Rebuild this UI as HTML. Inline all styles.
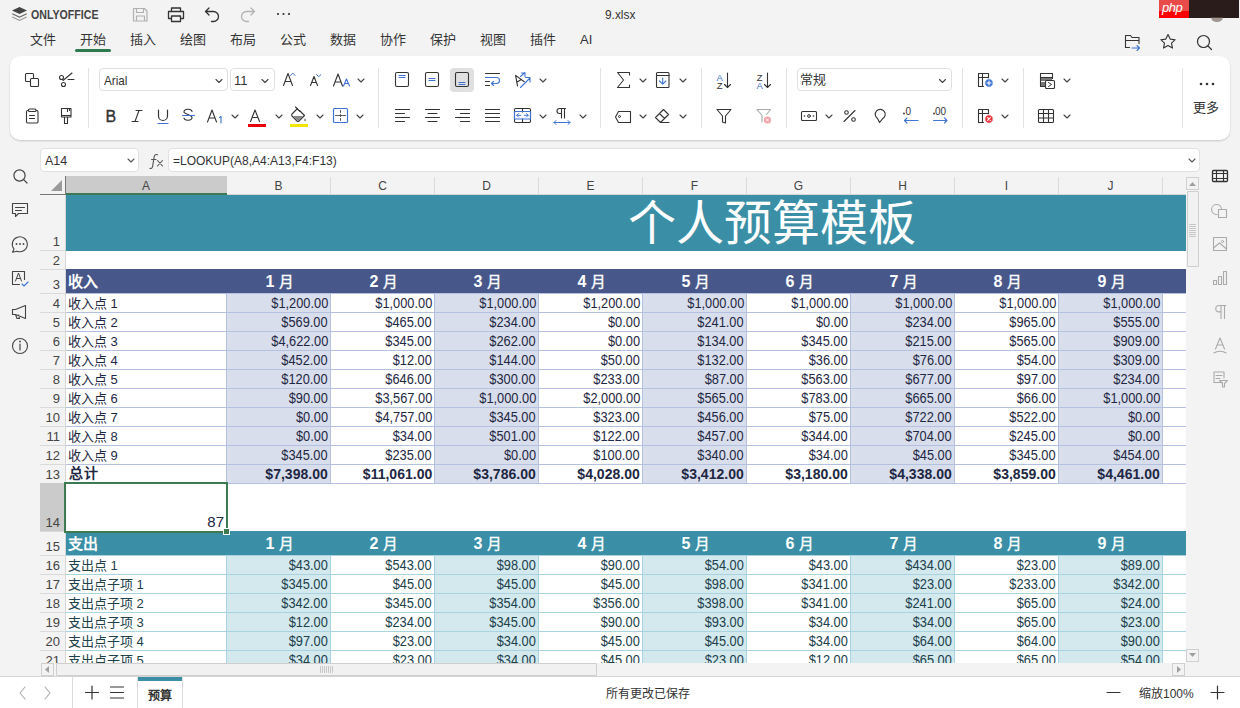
<!DOCTYPE html><html lang="zh-CN"><head><meta charset="utf-8"><style>

html,body{margin:0;padding:0;}
body{width:1240px;height:708px;overflow:hidden;position:relative;background:#f3f3f3;font-family:"Liberation Sans",sans-serif;}
.t{position:absolute;display:flex;align-items:flex-end;white-space:nowrap;font-size:13px;line-height:16px;padding-bottom:0px;box-sizing:border-box;}
.title{font-size:48px;line-height:1;color:#fff;justify-content:center;align-items:center;padding:0;font-family:"Liberation Serif",serif;}
.ab{position:absolute;}
.hd{font-size:12px;color:#444;line-height:15px;}
.rh{font-size:13px;color:#444;line-height:15px;}

</style></head><body>
<div class="ab" style="left:31px;top:8px;white-space:nowrap;font-size:12px;font-weight:bold;color:#444;line-height:15px;transform:scaleX(0.885);transform-origin:0 0">ONLYOFFICE</div>
<div class="ab" style="left:605px;top:7px;white-space:nowrap;font-size:13.5px;color:#333;line-height:16px;transform:scaleX(0.88);transform-origin:0 0">9.xlsx</div>
<div class="ab" style="left:1159px;top:0;width:30px;height:18px;background:#f00"></div>
<div class="ab" style="left:1159px;top:0;width:30px;height:11px;background:#e94b4b"></div>
<div class="ab" style="left:1189px;top:0;width:50px;height:18px;background:#2a1c1a"></div>
<div class="ab" style="left:1211px;top:17px;width:12px;height:5px;border-radius:0 0 6px 6px;background:#6b5a52;opacity:.6"></div>
<div class="ab" style="left:1162px;top:1px;white-space:nowrap;font-size:13px;font-style:italic;color:#fff;line-height:14px;letter-spacing:-0.5px">php</div>
<div class="ab" style="left:30px;top:32px;white-space:nowrap;font-size:13px;color:#333;line-height:16px">文件</div>
<div class="ab" style="left:80px;top:32px;white-space:nowrap;font-size:13px;color:#333;line-height:16px">开始</div>
<div class="ab" style="left:130px;top:32px;white-space:nowrap;font-size:13px;color:#333;line-height:16px">插入</div>
<div class="ab" style="left:180px;top:32px;white-space:nowrap;font-size:13px;color:#333;line-height:16px">绘图</div>
<div class="ab" style="left:230px;top:32px;white-space:nowrap;font-size:13px;color:#333;line-height:16px">布局</div>
<div class="ab" style="left:280px;top:32px;white-space:nowrap;font-size:13px;color:#333;line-height:16px">公式</div>
<div class="ab" style="left:330px;top:32px;white-space:nowrap;font-size:13px;color:#333;line-height:16px">数据</div>
<div class="ab" style="left:380px;top:32px;white-space:nowrap;font-size:13px;color:#333;line-height:16px">协作</div>
<div class="ab" style="left:430px;top:32px;white-space:nowrap;font-size:13px;color:#333;line-height:16px">保护</div>
<div class="ab" style="left:480px;top:32px;white-space:nowrap;font-size:13px;color:#333;line-height:16px">视图</div>
<div class="ab" style="left:530px;top:32px;white-space:nowrap;font-size:13px;color:#333;line-height:16px">插件</div>
<div class="ab" style="left:580px;top:32px;white-space:nowrap;font-size:13px;color:#333;line-height:16px">AI</div>
<div class="ab" style="left:75px;top:49px;width:36px;height:3px;border-radius:2px;background:#2e7a4e"></div>
<div class="ab" style="left:10px;top:56px;width:1220px;height:84px;background:#fff;border-radius:10px;box-shadow:0 1px 2px rgba(0,0,0,0.18)"></div>
<div class="ab" style="left:88px;top:68px;width:1px;height:60px;background:#e3e3e3"></div>
<div class="ab" style="left:378px;top:68px;width:1px;height:60px;background:#e3e3e3"></div>
<div class="ab" style="left:600px;top:68px;width:1px;height:60px;background:#e3e3e3"></div>
<div class="ab" style="left:701px;top:68px;width:1px;height:60px;background:#e3e3e3"></div>
<div class="ab" style="left:786px;top:68px;width:1px;height:60px;background:#e3e3e3"></div>
<div class="ab" style="left:962px;top:68px;width:1px;height:60px;background:#e3e3e3"></div>
<div class="ab" style="left:1023px;top:68px;width:1px;height:60px;background:#e3e3e3"></div>
<div class="ab" style="left:1182px;top:68px;width:1px;height:60px;background:#e3e3e3"></div>
<div class="ab" style="left:99px;top:68px;width:129px;height:23px;border:1px solid #e0e0e0;border-radius:4px;box-sizing:border-box;background:#fff"></div>
<div class="ab" style="left:104px;top:73px;white-space:nowrap;font-size:13px;color:#333;line-height:16px;transform:scaleX(0.9);transform-origin:0 0">Arial</div>
<div class="ab" style="left:230px;top:68px;width:45px;height:23px;border:1px solid #e0e0e0;border-radius:4px;box-sizing:border-box;background:#fff"></div>
<div class="ab" style="left:234px;top:73px;white-space:nowrap;font-size:13px;color:#333;line-height:16px">11</div>
<div class="ab" style="left:797px;top:68px;width:155px;height:23px;border:1px solid #e0e0e0;border-radius:4px;box-sizing:border-box;background:#fff"></div>
<div class="ab" style="left:800px;top:72px;white-space:nowrap;font-size:13px;color:#333;line-height:16px">常规</div>
<div class="ab" style="left:450px;top:68px;width:24px;height:24px;border-radius:4px;background:#e0e0e0"></div>
<div class="ab" style="left:1193px;top:100px;white-space:nowrap;font-size:13px;color:#333;line-height:16px">更多</div>
<div class="ab" style="left:40px;top:148px;width:99px;height:24px;border:1px solid #e2e2e2;border-radius:4px;box-sizing:border-box;background:#fff"></div>
<div class="ab" style="left:45px;top:154px;white-space:nowrap;font-size:12.5px;color:#333;line-height:14px">A14</div>
<div class="ab" style="left:168px;top:148px;width:1032px;height:24px;border:1px solid #e2e2e2;border-radius:4px;box-sizing:border-box;background:#fff"></div>
<div class="ab" style="left:173px;top:154px;white-space:nowrap;font-size:12.5px;color:#333;line-height:14px;transform:scaleX(0.96);transform-origin:0 0">=LOOKUP(A8,A4:A13,F4:F13)</div>
<div class="ab" style="left:40px;top:176px;width:1146px;height:18px;background:#f3f3f3"></div>
<div class="ab" style="left:66px;top:176px;width:161px;height:17px;background:#cbcbcb"></div>
<div class="ab" style="left:40px;top:194px;width:1146px;height:1px;background:#d6d6d6"></div>
<div class="ab" style="left:40px;top:194px;width:26px;height:1px;background:#777"></div>
<div class="ab" style="left:65px;top:176px;width:1px;height:19px;background:#777"></div>
<div class="ab" style="left:66px;top:193px;width:161px;height:2px;background:#3b7a52"></div>
<div class="ab hd" style="left:66px;top:179px;width:160px;text-align:center">A</div>
<div class="ab" style="left:330px;top:177px;width:1px;height:17px;background:#dadada"></div>
<div class="ab hd" style="left:227px;top:179px;width:103px;text-align:center">B</div>
<div class="ab" style="left:434px;top:177px;width:1px;height:17px;background:#dadada"></div>
<div class="ab hd" style="left:331px;top:179px;width:103px;text-align:center">C</div>
<div class="ab" style="left:538px;top:177px;width:1px;height:17px;background:#dadada"></div>
<div class="ab hd" style="left:435px;top:179px;width:103px;text-align:center">D</div>
<div class="ab" style="left:642px;top:177px;width:1px;height:17px;background:#dadada"></div>
<div class="ab hd" style="left:539px;top:179px;width:103px;text-align:center">E</div>
<div class="ab" style="left:746px;top:177px;width:1px;height:17px;background:#dadada"></div>
<div class="ab hd" style="left:643px;top:179px;width:103px;text-align:center">F</div>
<div class="ab" style="left:850px;top:177px;width:1px;height:17px;background:#dadada"></div>
<div class="ab hd" style="left:747px;top:179px;width:103px;text-align:center">G</div>
<div class="ab" style="left:954px;top:177px;width:1px;height:17px;background:#dadada"></div>
<div class="ab hd" style="left:851px;top:179px;width:103px;text-align:center">H</div>
<div class="ab" style="left:1058px;top:177px;width:1px;height:17px;background:#dadada"></div>
<div class="ab hd" style="left:955px;top:179px;width:103px;text-align:center">I</div>
<div class="ab" style="left:1162px;top:177px;width:1px;height:17px;background:#dadada"></div>
<div class="ab hd" style="left:1059px;top:179px;width:103px;text-align:center">J</div>
<div class="ab" style="left:40px;top:195px;width:25px;height:468px;background:#f3f3f3"></div>
<div class="ab" style="left:65px;top:195px;width:1px;height:468px;background:#d6d6d6"></div>
<div class="ab" style="left:40px;top:250px;width:25px;height:1px;background:#dadada"></div>
<div class="ab rh" style="left:40px;top:234px;width:20px;text-align:right">1</div>
<div class="ab" style="left:40px;top:269px;width:25px;height:1px;background:#dadada"></div>
<div class="ab rh" style="left:40px;top:253px;width:20px;text-align:right">2</div>
<div class="ab" style="left:40px;top:293px;width:25px;height:1px;background:#dadada"></div>
<div class="ab rh" style="left:40px;top:277px;width:20px;text-align:right">3</div>
<div class="ab" style="left:40px;top:312px;width:25px;height:1px;background:#dadada"></div>
<div class="ab rh" style="left:40px;top:296px;width:20px;text-align:right">4</div>
<div class="ab" style="left:40px;top:331px;width:25px;height:1px;background:#dadada"></div>
<div class="ab rh" style="left:40px;top:315px;width:20px;text-align:right">5</div>
<div class="ab" style="left:40px;top:350px;width:25px;height:1px;background:#dadada"></div>
<div class="ab rh" style="left:40px;top:334px;width:20px;text-align:right">6</div>
<div class="ab" style="left:40px;top:369px;width:25px;height:1px;background:#dadada"></div>
<div class="ab rh" style="left:40px;top:353px;width:20px;text-align:right">7</div>
<div class="ab" style="left:40px;top:388px;width:25px;height:1px;background:#dadada"></div>
<div class="ab rh" style="left:40px;top:372px;width:20px;text-align:right">8</div>
<div class="ab" style="left:40px;top:407px;width:25px;height:1px;background:#dadada"></div>
<div class="ab rh" style="left:40px;top:391px;width:20px;text-align:right">9</div>
<div class="ab" style="left:40px;top:426px;width:25px;height:1px;background:#dadada"></div>
<div class="ab rh" style="left:40px;top:410px;width:20px;text-align:right">10</div>
<div class="ab" style="left:40px;top:445px;width:25px;height:1px;background:#dadada"></div>
<div class="ab rh" style="left:40px;top:429px;width:20px;text-align:right">11</div>
<div class="ab" style="left:40px;top:464px;width:25px;height:1px;background:#dadada"></div>
<div class="ab rh" style="left:40px;top:448px;width:20px;text-align:right">12</div>
<div class="ab" style="left:40px;top:483px;width:25px;height:1px;background:#dadada"></div>
<div class="ab rh" style="left:40px;top:467px;width:20px;text-align:right">13</div>
<div class="ab" style="left:40px;top:483px;width:25px;height:48px;background:#cbcbcb"></div>
<div class="ab" style="left:40px;top:531px;width:25px;height:1px;background:#dadada"></div>
<div class="ab rh" style="left:40px;top:515px;width:20px;text-align:right">14</div>
<div class="ab" style="left:40px;top:555px;width:25px;height:1px;background:#dadada"></div>
<div class="ab rh" style="left:40px;top:539px;width:20px;text-align:right">15</div>
<div class="ab" style="left:40px;top:574px;width:25px;height:1px;background:#dadada"></div>
<div class="ab rh" style="left:40px;top:558px;width:20px;text-align:right">16</div>
<div class="ab" style="left:40px;top:593px;width:25px;height:1px;background:#dadada"></div>
<div class="ab rh" style="left:40px;top:577px;width:20px;text-align:right">17</div>
<div class="ab" style="left:40px;top:612px;width:25px;height:1px;background:#dadada"></div>
<div class="ab rh" style="left:40px;top:596px;width:20px;text-align:right">18</div>
<div class="ab" style="left:40px;top:631px;width:25px;height:1px;background:#dadada"></div>
<div class="ab rh" style="left:40px;top:615px;width:20px;text-align:right">19</div>
<div class="ab" style="left:40px;top:650px;width:25px;height:1px;background:#dadada"></div>
<div class="ab rh" style="left:40px;top:634px;width:20px;text-align:right">20</div>
<div class="ab" style="left:40px;top:669px;width:25px;height:1px;background:#dadada"></div>
<div class="ab rh" style="left:40px;top:653px;width:20px;text-align:right">21</div>
<div class="ab" style="left:1186px;top:176px;width:13px;height:487px;background:#f3f3f3"></div>
<div class="ab" style="left:1186px;top:177px;width:13px;height:13px;border:1px solid #d0d0d0;box-sizing:border-box;background:#f3f3f3"></div>
<div class="ab" style="left:1187px;top:191px;width:12px;height:76px;border:1px solid #cfcfcf;box-sizing:border-box;background:#f1f1f1;border-radius:1px"></div>
<div class="ab" style="left:1186px;top:649px;width:13px;height:13px;border:1px solid #d0d0d0;box-sizing:border-box;background:#f3f3f3"></div>
<div class="ab" style="left:40px;top:663px;width:1146px;height:14px;background:#f3f3f3"></div>
<div class="ab" style="left:41px;top:663px;width:13px;height:13px;border:1px solid #d0d0d0;box-sizing:border-box;background:#f3f3f3"></div>
<div class="ab" style="left:56px;top:663px;width:541px;height:13px;border:1px solid #cfcfcf;box-sizing:border-box;background:#f1f1f1;border-radius:1px"></div>
<div class="ab" style="left:1172px;top:663px;width:13px;height:13px;border:1px solid #d0d0d0;box-sizing:border-box;background:#f3f3f3"></div>
<div class="ab" style="left:0;top:676px;width:1240px;height:1px;background:#d4d4d4"></div>
<div class="ab" style="left:0;top:677px;width:1240px;height:31px;background:#fff"></div>
<div class="ab" style="left:72px;top:677px;width:1px;height:31px;background:#dcdcdc"></div>
<div class="ab" style="left:137px;top:677px;width:1px;height:31px;background:#dcdcdc"></div>
<div class="ab" style="left:182px;top:677px;width:1px;height:31px;background:#dcdcdc"></div>
<div class="ab" style="left:138px;top:677px;width:44px;height:4px;background:#3a8fa6"></div>
<div class="ab" style="left:148px;top:689px;white-space:nowrap;font-size:12px;color:#333;font-weight:bold;line-height:15px">预算</div>
<div class="ab" style="left:606px;top:687px;white-space:nowrap;font-size:12px;color:#333;line-height:15px">所有更改已保存</div>
<div class="ab" style="left:1139px;top:687px;white-space:nowrap;font-size:12px;color:#333;line-height:15px">缩放100%</div>
<div id="grid" style="position:absolute;left:0;top:0;width:1240px;height:708px;overflow:hidden;clip-path:inset(195px 54px 45px 66px)">
<div style="position:absolute;left:66px;top:195px;width:1120px;height:468px;background:#fff;"></div>
<div style="position:absolute;left:66px;top:195px;width:1120px;height:56px;background:#3a8fa6;"></div>
<div class="t title" style="left:622px;top:196px;width:300px;height:56px;">个人预算模板</div>
<div style="position:absolute;left:66px;top:269px;width:1120px;height:24px;background:#48578a;"></div>
<div style="position:absolute;left:66px;top:294px;width:160px;height:18px;background:#fff;"></div>
<div style="position:absolute;left:227px;top:294px;width:103px;height:18px;background:#d9deec;"></div>
<div style="position:absolute;left:331px;top:294px;width:103px;height:18px;background:#fff;"></div>
<div style="position:absolute;left:435px;top:294px;width:103px;height:18px;background:#d9deec;"></div>
<div style="position:absolute;left:539px;top:294px;width:103px;height:18px;background:#fff;"></div>
<div style="position:absolute;left:643px;top:294px;width:103px;height:18px;background:#d9deec;"></div>
<div style="position:absolute;left:747px;top:294px;width:103px;height:18px;background:#fff;"></div>
<div style="position:absolute;left:851px;top:294px;width:103px;height:18px;background:#d9deec;"></div>
<div style="position:absolute;left:955px;top:294px;width:103px;height:18px;background:#fff;"></div>
<div style="position:absolute;left:1059px;top:294px;width:103px;height:18px;background:#d9deec;"></div>
<div style="position:absolute;left:66px;top:313px;width:160px;height:18px;background:#fff;"></div>
<div style="position:absolute;left:227px;top:313px;width:103px;height:18px;background:#d9deec;"></div>
<div style="position:absolute;left:331px;top:313px;width:103px;height:18px;background:#fff;"></div>
<div style="position:absolute;left:435px;top:313px;width:103px;height:18px;background:#d9deec;"></div>
<div style="position:absolute;left:539px;top:313px;width:103px;height:18px;background:#fff;"></div>
<div style="position:absolute;left:643px;top:313px;width:103px;height:18px;background:#d9deec;"></div>
<div style="position:absolute;left:747px;top:313px;width:103px;height:18px;background:#fff;"></div>
<div style="position:absolute;left:851px;top:313px;width:103px;height:18px;background:#d9deec;"></div>
<div style="position:absolute;left:955px;top:313px;width:103px;height:18px;background:#fff;"></div>
<div style="position:absolute;left:1059px;top:313px;width:103px;height:18px;background:#d9deec;"></div>
<div style="position:absolute;left:66px;top:332px;width:160px;height:18px;background:#fff;"></div>
<div style="position:absolute;left:227px;top:332px;width:103px;height:18px;background:#d9deec;"></div>
<div style="position:absolute;left:331px;top:332px;width:103px;height:18px;background:#fff;"></div>
<div style="position:absolute;left:435px;top:332px;width:103px;height:18px;background:#d9deec;"></div>
<div style="position:absolute;left:539px;top:332px;width:103px;height:18px;background:#fff;"></div>
<div style="position:absolute;left:643px;top:332px;width:103px;height:18px;background:#d9deec;"></div>
<div style="position:absolute;left:747px;top:332px;width:103px;height:18px;background:#fff;"></div>
<div style="position:absolute;left:851px;top:332px;width:103px;height:18px;background:#d9deec;"></div>
<div style="position:absolute;left:955px;top:332px;width:103px;height:18px;background:#fff;"></div>
<div style="position:absolute;left:1059px;top:332px;width:103px;height:18px;background:#d9deec;"></div>
<div style="position:absolute;left:66px;top:351px;width:160px;height:18px;background:#fff;"></div>
<div style="position:absolute;left:227px;top:351px;width:103px;height:18px;background:#d9deec;"></div>
<div style="position:absolute;left:331px;top:351px;width:103px;height:18px;background:#fff;"></div>
<div style="position:absolute;left:435px;top:351px;width:103px;height:18px;background:#d9deec;"></div>
<div style="position:absolute;left:539px;top:351px;width:103px;height:18px;background:#fff;"></div>
<div style="position:absolute;left:643px;top:351px;width:103px;height:18px;background:#d9deec;"></div>
<div style="position:absolute;left:747px;top:351px;width:103px;height:18px;background:#fff;"></div>
<div style="position:absolute;left:851px;top:351px;width:103px;height:18px;background:#d9deec;"></div>
<div style="position:absolute;left:955px;top:351px;width:103px;height:18px;background:#fff;"></div>
<div style="position:absolute;left:1059px;top:351px;width:103px;height:18px;background:#d9deec;"></div>
<div style="position:absolute;left:66px;top:370px;width:160px;height:18px;background:#fff;"></div>
<div style="position:absolute;left:227px;top:370px;width:103px;height:18px;background:#d9deec;"></div>
<div style="position:absolute;left:331px;top:370px;width:103px;height:18px;background:#fff;"></div>
<div style="position:absolute;left:435px;top:370px;width:103px;height:18px;background:#d9deec;"></div>
<div style="position:absolute;left:539px;top:370px;width:103px;height:18px;background:#fff;"></div>
<div style="position:absolute;left:643px;top:370px;width:103px;height:18px;background:#d9deec;"></div>
<div style="position:absolute;left:747px;top:370px;width:103px;height:18px;background:#fff;"></div>
<div style="position:absolute;left:851px;top:370px;width:103px;height:18px;background:#d9deec;"></div>
<div style="position:absolute;left:955px;top:370px;width:103px;height:18px;background:#fff;"></div>
<div style="position:absolute;left:1059px;top:370px;width:103px;height:18px;background:#d9deec;"></div>
<div style="position:absolute;left:66px;top:389px;width:160px;height:18px;background:#fff;"></div>
<div style="position:absolute;left:227px;top:389px;width:103px;height:18px;background:#d9deec;"></div>
<div style="position:absolute;left:331px;top:389px;width:103px;height:18px;background:#fff;"></div>
<div style="position:absolute;left:435px;top:389px;width:103px;height:18px;background:#d9deec;"></div>
<div style="position:absolute;left:539px;top:389px;width:103px;height:18px;background:#fff;"></div>
<div style="position:absolute;left:643px;top:389px;width:103px;height:18px;background:#d9deec;"></div>
<div style="position:absolute;left:747px;top:389px;width:103px;height:18px;background:#fff;"></div>
<div style="position:absolute;left:851px;top:389px;width:103px;height:18px;background:#d9deec;"></div>
<div style="position:absolute;left:955px;top:389px;width:103px;height:18px;background:#fff;"></div>
<div style="position:absolute;left:1059px;top:389px;width:103px;height:18px;background:#d9deec;"></div>
<div style="position:absolute;left:66px;top:408px;width:160px;height:18px;background:#fff;"></div>
<div style="position:absolute;left:227px;top:408px;width:103px;height:18px;background:#d9deec;"></div>
<div style="position:absolute;left:331px;top:408px;width:103px;height:18px;background:#fff;"></div>
<div style="position:absolute;left:435px;top:408px;width:103px;height:18px;background:#d9deec;"></div>
<div style="position:absolute;left:539px;top:408px;width:103px;height:18px;background:#fff;"></div>
<div style="position:absolute;left:643px;top:408px;width:103px;height:18px;background:#d9deec;"></div>
<div style="position:absolute;left:747px;top:408px;width:103px;height:18px;background:#fff;"></div>
<div style="position:absolute;left:851px;top:408px;width:103px;height:18px;background:#d9deec;"></div>
<div style="position:absolute;left:955px;top:408px;width:103px;height:18px;background:#fff;"></div>
<div style="position:absolute;left:1059px;top:408px;width:103px;height:18px;background:#d9deec;"></div>
<div style="position:absolute;left:66px;top:427px;width:160px;height:18px;background:#fff;"></div>
<div style="position:absolute;left:227px;top:427px;width:103px;height:18px;background:#d9deec;"></div>
<div style="position:absolute;left:331px;top:427px;width:103px;height:18px;background:#fff;"></div>
<div style="position:absolute;left:435px;top:427px;width:103px;height:18px;background:#d9deec;"></div>
<div style="position:absolute;left:539px;top:427px;width:103px;height:18px;background:#fff;"></div>
<div style="position:absolute;left:643px;top:427px;width:103px;height:18px;background:#d9deec;"></div>
<div style="position:absolute;left:747px;top:427px;width:103px;height:18px;background:#fff;"></div>
<div style="position:absolute;left:851px;top:427px;width:103px;height:18px;background:#d9deec;"></div>
<div style="position:absolute;left:955px;top:427px;width:103px;height:18px;background:#fff;"></div>
<div style="position:absolute;left:1059px;top:427px;width:103px;height:18px;background:#d9deec;"></div>
<div style="position:absolute;left:66px;top:446px;width:160px;height:18px;background:#fff;"></div>
<div style="position:absolute;left:227px;top:446px;width:103px;height:18px;background:#d9deec;"></div>
<div style="position:absolute;left:331px;top:446px;width:103px;height:18px;background:#fff;"></div>
<div style="position:absolute;left:435px;top:446px;width:103px;height:18px;background:#d9deec;"></div>
<div style="position:absolute;left:539px;top:446px;width:103px;height:18px;background:#fff;"></div>
<div style="position:absolute;left:643px;top:446px;width:103px;height:18px;background:#d9deec;"></div>
<div style="position:absolute;left:747px;top:446px;width:103px;height:18px;background:#fff;"></div>
<div style="position:absolute;left:851px;top:446px;width:103px;height:18px;background:#d9deec;"></div>
<div style="position:absolute;left:955px;top:446px;width:103px;height:18px;background:#fff;"></div>
<div style="position:absolute;left:1059px;top:446px;width:103px;height:18px;background:#d9deec;"></div>
<div style="position:absolute;left:66px;top:465px;width:160px;height:18px;background:#fff;"></div>
<div style="position:absolute;left:227px;top:465px;width:103px;height:18px;background:#d9deec;"></div>
<div style="position:absolute;left:331px;top:465px;width:103px;height:18px;background:#fff;"></div>
<div style="position:absolute;left:435px;top:465px;width:103px;height:18px;background:#d9deec;"></div>
<div style="position:absolute;left:539px;top:465px;width:103px;height:18px;background:#fff;"></div>
<div style="position:absolute;left:643px;top:465px;width:103px;height:18px;background:#d9deec;"></div>
<div style="position:absolute;left:747px;top:465px;width:103px;height:18px;background:#fff;"></div>
<div style="position:absolute;left:851px;top:465px;width:103px;height:18px;background:#d9deec;"></div>
<div style="position:absolute;left:955px;top:465px;width:103px;height:18px;background:#fff;"></div>
<div style="position:absolute;left:1059px;top:465px;width:103px;height:18px;background:#d9deec;"></div>
<div style="position:absolute;left:66px;top:293px;width:1120px;height:1px;background:#b4c1e0;"></div>
<div style="position:absolute;left:66px;top:312px;width:1120px;height:1px;background:#b4c1e0;"></div>
<div style="position:absolute;left:66px;top:331px;width:1120px;height:1px;background:#b4c1e0;"></div>
<div style="position:absolute;left:66px;top:350px;width:1120px;height:1px;background:#b4c1e0;"></div>
<div style="position:absolute;left:66px;top:369px;width:1120px;height:1px;background:#b4c1e0;"></div>
<div style="position:absolute;left:66px;top:388px;width:1120px;height:1px;background:#b4c1e0;"></div>
<div style="position:absolute;left:66px;top:407px;width:1120px;height:1px;background:#b4c1e0;"></div>
<div style="position:absolute;left:66px;top:426px;width:1120px;height:1px;background:#b4c1e0;"></div>
<div style="position:absolute;left:66px;top:445px;width:1120px;height:1px;background:#b4c1e0;"></div>
<div style="position:absolute;left:66px;top:464px;width:1120px;height:1px;background:#b4c1e0;"></div>
<div style="position:absolute;left:66px;top:483px;width:1120px;height:1px;background:#b4c1e0;"></div>
<div style="position:absolute;left:226px;top:293px;width:1px;height:190px;background:#b4c1e0;"></div>
<div style="position:absolute;left:330px;top:293px;width:1px;height:190px;background:#b4c1e0;"></div>
<div style="position:absolute;left:434px;top:293px;width:1px;height:190px;background:#b4c1e0;"></div>
<div style="position:absolute;left:538px;top:293px;width:1px;height:190px;background:#b4c1e0;"></div>
<div style="position:absolute;left:642px;top:293px;width:1px;height:190px;background:#b4c1e0;"></div>
<div style="position:absolute;left:746px;top:293px;width:1px;height:190px;background:#b4c1e0;"></div>
<div style="position:absolute;left:850px;top:293px;width:1px;height:190px;background:#b4c1e0;"></div>
<div style="position:absolute;left:954px;top:293px;width:1px;height:190px;background:#b4c1e0;"></div>
<div style="position:absolute;left:1058px;top:293px;width:1px;height:190px;background:#b4c1e0;"></div>
<div style="position:absolute;left:1162px;top:293px;width:1px;height:190px;background:#b4c1e0;"></div>
<div style="position:absolute;left:66px;top:531px;width:1120px;height:24px;background:#3a8fa6;"></div>
<div style="position:absolute;left:66px;top:556px;width:160px;height:18px;background:#fff;"></div>
<div style="position:absolute;left:227px;top:556px;width:103px;height:18px;background:#d3e9ee;"></div>
<div style="position:absolute;left:331px;top:556px;width:103px;height:18px;background:#fff;"></div>
<div style="position:absolute;left:435px;top:556px;width:103px;height:18px;background:#d3e9ee;"></div>
<div style="position:absolute;left:539px;top:556px;width:103px;height:18px;background:#fff;"></div>
<div style="position:absolute;left:643px;top:556px;width:103px;height:18px;background:#d3e9ee;"></div>
<div style="position:absolute;left:747px;top:556px;width:103px;height:18px;background:#fff;"></div>
<div style="position:absolute;left:851px;top:556px;width:103px;height:18px;background:#d3e9ee;"></div>
<div style="position:absolute;left:955px;top:556px;width:103px;height:18px;background:#fff;"></div>
<div style="position:absolute;left:1059px;top:556px;width:103px;height:18px;background:#d3e9ee;"></div>
<div style="position:absolute;left:66px;top:575px;width:160px;height:18px;background:#fff;"></div>
<div style="position:absolute;left:227px;top:575px;width:103px;height:18px;background:#d3e9ee;"></div>
<div style="position:absolute;left:331px;top:575px;width:103px;height:18px;background:#fff;"></div>
<div style="position:absolute;left:435px;top:575px;width:103px;height:18px;background:#d3e9ee;"></div>
<div style="position:absolute;left:539px;top:575px;width:103px;height:18px;background:#fff;"></div>
<div style="position:absolute;left:643px;top:575px;width:103px;height:18px;background:#d3e9ee;"></div>
<div style="position:absolute;left:747px;top:575px;width:103px;height:18px;background:#fff;"></div>
<div style="position:absolute;left:851px;top:575px;width:103px;height:18px;background:#d3e9ee;"></div>
<div style="position:absolute;left:955px;top:575px;width:103px;height:18px;background:#fff;"></div>
<div style="position:absolute;left:1059px;top:575px;width:103px;height:18px;background:#d3e9ee;"></div>
<div style="position:absolute;left:66px;top:594px;width:160px;height:18px;background:#fff;"></div>
<div style="position:absolute;left:227px;top:594px;width:103px;height:18px;background:#d3e9ee;"></div>
<div style="position:absolute;left:331px;top:594px;width:103px;height:18px;background:#fff;"></div>
<div style="position:absolute;left:435px;top:594px;width:103px;height:18px;background:#d3e9ee;"></div>
<div style="position:absolute;left:539px;top:594px;width:103px;height:18px;background:#fff;"></div>
<div style="position:absolute;left:643px;top:594px;width:103px;height:18px;background:#d3e9ee;"></div>
<div style="position:absolute;left:747px;top:594px;width:103px;height:18px;background:#fff;"></div>
<div style="position:absolute;left:851px;top:594px;width:103px;height:18px;background:#d3e9ee;"></div>
<div style="position:absolute;left:955px;top:594px;width:103px;height:18px;background:#fff;"></div>
<div style="position:absolute;left:1059px;top:594px;width:103px;height:18px;background:#d3e9ee;"></div>
<div style="position:absolute;left:66px;top:613px;width:160px;height:18px;background:#fff;"></div>
<div style="position:absolute;left:227px;top:613px;width:103px;height:18px;background:#d3e9ee;"></div>
<div style="position:absolute;left:331px;top:613px;width:103px;height:18px;background:#fff;"></div>
<div style="position:absolute;left:435px;top:613px;width:103px;height:18px;background:#d3e9ee;"></div>
<div style="position:absolute;left:539px;top:613px;width:103px;height:18px;background:#fff;"></div>
<div style="position:absolute;left:643px;top:613px;width:103px;height:18px;background:#d3e9ee;"></div>
<div style="position:absolute;left:747px;top:613px;width:103px;height:18px;background:#fff;"></div>
<div style="position:absolute;left:851px;top:613px;width:103px;height:18px;background:#d3e9ee;"></div>
<div style="position:absolute;left:955px;top:613px;width:103px;height:18px;background:#fff;"></div>
<div style="position:absolute;left:1059px;top:613px;width:103px;height:18px;background:#d3e9ee;"></div>
<div style="position:absolute;left:66px;top:632px;width:160px;height:18px;background:#fff;"></div>
<div style="position:absolute;left:227px;top:632px;width:103px;height:18px;background:#d3e9ee;"></div>
<div style="position:absolute;left:331px;top:632px;width:103px;height:18px;background:#fff;"></div>
<div style="position:absolute;left:435px;top:632px;width:103px;height:18px;background:#d3e9ee;"></div>
<div style="position:absolute;left:539px;top:632px;width:103px;height:18px;background:#fff;"></div>
<div style="position:absolute;left:643px;top:632px;width:103px;height:18px;background:#d3e9ee;"></div>
<div style="position:absolute;left:747px;top:632px;width:103px;height:18px;background:#fff;"></div>
<div style="position:absolute;left:851px;top:632px;width:103px;height:18px;background:#d3e9ee;"></div>
<div style="position:absolute;left:955px;top:632px;width:103px;height:18px;background:#fff;"></div>
<div style="position:absolute;left:1059px;top:632px;width:103px;height:18px;background:#d3e9ee;"></div>
<div style="position:absolute;left:66px;top:651px;width:160px;height:18px;background:#fff;"></div>
<div style="position:absolute;left:227px;top:651px;width:103px;height:18px;background:#d3e9ee;"></div>
<div style="position:absolute;left:331px;top:651px;width:103px;height:18px;background:#fff;"></div>
<div style="position:absolute;left:435px;top:651px;width:103px;height:18px;background:#d3e9ee;"></div>
<div style="position:absolute;left:539px;top:651px;width:103px;height:18px;background:#fff;"></div>
<div style="position:absolute;left:643px;top:651px;width:103px;height:18px;background:#d3e9ee;"></div>
<div style="position:absolute;left:747px;top:651px;width:103px;height:18px;background:#fff;"></div>
<div style="position:absolute;left:851px;top:651px;width:103px;height:18px;background:#d3e9ee;"></div>
<div style="position:absolute;left:955px;top:651px;width:103px;height:18px;background:#fff;"></div>
<div style="position:absolute;left:1059px;top:651px;width:103px;height:18px;background:#d3e9ee;"></div>
<div style="position:absolute;left:66px;top:555px;width:1120px;height:1px;background:#a8d3e1;"></div>
<div style="position:absolute;left:66px;top:574px;width:1120px;height:1px;background:#a8d3e1;"></div>
<div style="position:absolute;left:66px;top:593px;width:1120px;height:1px;background:#a8d3e1;"></div>
<div style="position:absolute;left:66px;top:612px;width:1120px;height:1px;background:#a8d3e1;"></div>
<div style="position:absolute;left:66px;top:631px;width:1120px;height:1px;background:#a8d3e1;"></div>
<div style="position:absolute;left:66px;top:650px;width:1120px;height:1px;background:#a8d3e1;"></div>
<div style="position:absolute;left:66px;top:669px;width:1120px;height:1px;background:#a8d3e1;"></div>
<div style="position:absolute;left:226px;top:555px;width:1px;height:108px;background:#a8d3e1;"></div>
<div style="position:absolute;left:330px;top:555px;width:1px;height:108px;background:#a8d3e1;"></div>
<div style="position:absolute;left:434px;top:555px;width:1px;height:108px;background:#a8d3e1;"></div>
<div style="position:absolute;left:538px;top:555px;width:1px;height:108px;background:#a8d3e1;"></div>
<div style="position:absolute;left:642px;top:555px;width:1px;height:108px;background:#a8d3e1;"></div>
<div style="position:absolute;left:746px;top:555px;width:1px;height:108px;background:#a8d3e1;"></div>
<div style="position:absolute;left:850px;top:555px;width:1px;height:108px;background:#a8d3e1;"></div>
<div style="position:absolute;left:954px;top:555px;width:1px;height:108px;background:#a8d3e1;"></div>
<div style="position:absolute;left:1058px;top:555px;width:1px;height:108px;background:#a8d3e1;"></div>
<div style="position:absolute;left:1162px;top:555px;width:1px;height:108px;background:#a8d3e1;"></div>
<div class="t" style="left:68px;top:270px;width:150px;height:23px;color:#fff;font-weight:bold;font-size:15px;line-height:1;align-items:flex-end;padding-bottom:4px;box-sizing:border-box">收入</div>
<div class="t" style="left:265.5px;top:270px;width:12px;height:23px;color:#fff;font-weight:bold;font-size:16px;line-height:1;padding-bottom:3px;">1</div>
<div class="t" style="left:279px;top:270px;width:16px;height:23px;color:#fff;font-weight:normal;-webkit-text-stroke:0.4px #fff;font-size:14.5px;line-height:1;padding-bottom:4px;">月</div>
<div class="t" style="left:369.5px;top:270px;width:12px;height:23px;color:#fff;font-weight:bold;font-size:16px;line-height:1;padding-bottom:3px;">2</div>
<div class="t" style="left:383px;top:270px;width:16px;height:23px;color:#fff;font-weight:normal;-webkit-text-stroke:0.4px #fff;font-size:14.5px;line-height:1;padding-bottom:4px;">月</div>
<div class="t" style="left:473.5px;top:270px;width:12px;height:23px;color:#fff;font-weight:bold;font-size:16px;line-height:1;padding-bottom:3px;">3</div>
<div class="t" style="left:487px;top:270px;width:16px;height:23px;color:#fff;font-weight:normal;-webkit-text-stroke:0.4px #fff;font-size:14.5px;line-height:1;padding-bottom:4px;">月</div>
<div class="t" style="left:577.5px;top:270px;width:12px;height:23px;color:#fff;font-weight:bold;font-size:16px;line-height:1;padding-bottom:3px;">4</div>
<div class="t" style="left:591px;top:270px;width:16px;height:23px;color:#fff;font-weight:normal;-webkit-text-stroke:0.4px #fff;font-size:14.5px;line-height:1;padding-bottom:4px;">月</div>
<div class="t" style="left:681.5px;top:270px;width:12px;height:23px;color:#fff;font-weight:bold;font-size:16px;line-height:1;padding-bottom:3px;">5</div>
<div class="t" style="left:695px;top:270px;width:16px;height:23px;color:#fff;font-weight:normal;-webkit-text-stroke:0.4px #fff;font-size:14.5px;line-height:1;padding-bottom:4px;">月</div>
<div class="t" style="left:785.5px;top:270px;width:12px;height:23px;color:#fff;font-weight:bold;font-size:16px;line-height:1;padding-bottom:3px;">6</div>
<div class="t" style="left:799px;top:270px;width:16px;height:23px;color:#fff;font-weight:normal;-webkit-text-stroke:0.4px #fff;font-size:14.5px;line-height:1;padding-bottom:4px;">月</div>
<div class="t" style="left:889.5px;top:270px;width:12px;height:23px;color:#fff;font-weight:bold;font-size:16px;line-height:1;padding-bottom:3px;">7</div>
<div class="t" style="left:903px;top:270px;width:16px;height:23px;color:#fff;font-weight:normal;-webkit-text-stroke:0.4px #fff;font-size:14.5px;line-height:1;padding-bottom:4px;">月</div>
<div class="t" style="left:993.5px;top:270px;width:12px;height:23px;color:#fff;font-weight:bold;font-size:16px;line-height:1;padding-bottom:3px;">8</div>
<div class="t" style="left:1007px;top:270px;width:16px;height:23px;color:#fff;font-weight:normal;-webkit-text-stroke:0.4px #fff;font-size:14.5px;line-height:1;padding-bottom:4px;">月</div>
<div class="t" style="left:1097.5px;top:270px;width:12px;height:23px;color:#fff;font-weight:bold;font-size:16px;line-height:1;padding-bottom:3px;">9</div>
<div class="t" style="left:1111px;top:270px;width:16px;height:23px;color:#fff;font-weight:normal;-webkit-text-stroke:0.4px #fff;font-size:14.5px;line-height:1;padding-bottom:4px;">月</div>
<div class="t" style="left:68px;top:532px;width:150px;height:23px;color:#fff;font-weight:bold;font-size:15px;line-height:1;align-items:flex-end;padding-bottom:4px;box-sizing:border-box">支出</div>
<div class="t" style="left:265.5px;top:532px;width:12px;height:23px;color:#fff;font-weight:bold;font-size:16px;line-height:1;padding-bottom:3px;">1</div>
<div class="t" style="left:279px;top:532px;width:16px;height:23px;color:#fff;font-weight:normal;-webkit-text-stroke:0.4px #fff;font-size:14.5px;line-height:1;padding-bottom:4px;">月</div>
<div class="t" style="left:369.5px;top:532px;width:12px;height:23px;color:#fff;font-weight:bold;font-size:16px;line-height:1;padding-bottom:3px;">2</div>
<div class="t" style="left:383px;top:532px;width:16px;height:23px;color:#fff;font-weight:normal;-webkit-text-stroke:0.4px #fff;font-size:14.5px;line-height:1;padding-bottom:4px;">月</div>
<div class="t" style="left:473.5px;top:532px;width:12px;height:23px;color:#fff;font-weight:bold;font-size:16px;line-height:1;padding-bottom:3px;">3</div>
<div class="t" style="left:487px;top:532px;width:16px;height:23px;color:#fff;font-weight:normal;-webkit-text-stroke:0.4px #fff;font-size:14.5px;line-height:1;padding-bottom:4px;">月</div>
<div class="t" style="left:577.5px;top:532px;width:12px;height:23px;color:#fff;font-weight:bold;font-size:16px;line-height:1;padding-bottom:3px;">4</div>
<div class="t" style="left:591px;top:532px;width:16px;height:23px;color:#fff;font-weight:normal;-webkit-text-stroke:0.4px #fff;font-size:14.5px;line-height:1;padding-bottom:4px;">月</div>
<div class="t" style="left:681.5px;top:532px;width:12px;height:23px;color:#fff;font-weight:bold;font-size:16px;line-height:1;padding-bottom:3px;">5</div>
<div class="t" style="left:695px;top:532px;width:16px;height:23px;color:#fff;font-weight:normal;-webkit-text-stroke:0.4px #fff;font-size:14.5px;line-height:1;padding-bottom:4px;">月</div>
<div class="t" style="left:785.5px;top:532px;width:12px;height:23px;color:#fff;font-weight:bold;font-size:16px;line-height:1;padding-bottom:3px;">6</div>
<div class="t" style="left:799px;top:532px;width:16px;height:23px;color:#fff;font-weight:normal;-webkit-text-stroke:0.4px #fff;font-size:14.5px;line-height:1;padding-bottom:4px;">月</div>
<div class="t" style="left:889.5px;top:532px;width:12px;height:23px;color:#fff;font-weight:bold;font-size:16px;line-height:1;padding-bottom:3px;">7</div>
<div class="t" style="left:903px;top:532px;width:16px;height:23px;color:#fff;font-weight:normal;-webkit-text-stroke:0.4px #fff;font-size:14.5px;line-height:1;padding-bottom:4px;">月</div>
<div class="t" style="left:993.5px;top:532px;width:12px;height:23px;color:#fff;font-weight:bold;font-size:16px;line-height:1;padding-bottom:3px;">8</div>
<div class="t" style="left:1007px;top:532px;width:16px;height:23px;color:#fff;font-weight:normal;-webkit-text-stroke:0.4px #fff;font-size:14.5px;line-height:1;padding-bottom:4px;">月</div>
<div class="t" style="left:1097.5px;top:532px;width:12px;height:23px;color:#fff;font-weight:bold;font-size:16px;line-height:1;padding-bottom:3px;">9</div>
<div class="t" style="left:1111px;top:532px;width:16px;height:23px;color:#fff;font-weight:normal;-webkit-text-stroke:0.4px #fff;font-size:14.5px;line-height:1;padding-bottom:4px;">月</div>
<div class="t" style="left:68px;top:294px;width:155px;height:18px;color:#1e2743;">收入点 1</div>
<div class="t" style="left:227px;top:294px;width:101px;height:18px;color:#1e2743;justify-content:flex-end;font-size:14px;padding-bottom:1px;"><span style="display:inline-block;transform:scaleX(0.915);transform-origin:100% 100%">$1,200.00</span></div>
<div class="t" style="left:331px;top:294px;width:101px;height:18px;color:#1e2743;justify-content:flex-end;font-size:14px;padding-bottom:1px;"><span style="display:inline-block;transform:scaleX(0.915);transform-origin:100% 100%">$1,000.00</span></div>
<div class="t" style="left:435px;top:294px;width:101px;height:18px;color:#1e2743;justify-content:flex-end;font-size:14px;padding-bottom:1px;"><span style="display:inline-block;transform:scaleX(0.915);transform-origin:100% 100%">$1,000.00</span></div>
<div class="t" style="left:539px;top:294px;width:101px;height:18px;color:#1e2743;justify-content:flex-end;font-size:14px;padding-bottom:1px;"><span style="display:inline-block;transform:scaleX(0.915);transform-origin:100% 100%">$1,200.00</span></div>
<div class="t" style="left:643px;top:294px;width:101px;height:18px;color:#1e2743;justify-content:flex-end;font-size:14px;padding-bottom:1px;"><span style="display:inline-block;transform:scaleX(0.915);transform-origin:100% 100%">$1,000.00</span></div>
<div class="t" style="left:747px;top:294px;width:101px;height:18px;color:#1e2743;justify-content:flex-end;font-size:14px;padding-bottom:1px;"><span style="display:inline-block;transform:scaleX(0.915);transform-origin:100% 100%">$1,000.00</span></div>
<div class="t" style="left:851px;top:294px;width:101px;height:18px;color:#1e2743;justify-content:flex-end;font-size:14px;padding-bottom:1px;"><span style="display:inline-block;transform:scaleX(0.915);transform-origin:100% 100%">$1,000.00</span></div>
<div class="t" style="left:955px;top:294px;width:101px;height:18px;color:#1e2743;justify-content:flex-end;font-size:14px;padding-bottom:1px;"><span style="display:inline-block;transform:scaleX(0.915);transform-origin:100% 100%">$1,000.00</span></div>
<div class="t" style="left:1059px;top:294px;width:101px;height:18px;color:#1e2743;justify-content:flex-end;font-size:14px;padding-bottom:1px;"><span style="display:inline-block;transform:scaleX(0.915);transform-origin:100% 100%">$1,000.00</span></div>
<div class="t" style="left:68px;top:313px;width:155px;height:18px;color:#1e2743;">收入点 2</div>
<div class="t" style="left:227px;top:313px;width:101px;height:18px;color:#1e2743;justify-content:flex-end;font-size:14px;padding-bottom:1px;"><span style="display:inline-block;transform:scaleX(0.915);transform-origin:100% 100%">$569.00</span></div>
<div class="t" style="left:331px;top:313px;width:101px;height:18px;color:#1e2743;justify-content:flex-end;font-size:14px;padding-bottom:1px;"><span style="display:inline-block;transform:scaleX(0.915);transform-origin:100% 100%">$465.00</span></div>
<div class="t" style="left:435px;top:313px;width:101px;height:18px;color:#1e2743;justify-content:flex-end;font-size:14px;padding-bottom:1px;"><span style="display:inline-block;transform:scaleX(0.915);transform-origin:100% 100%">$234.00</span></div>
<div class="t" style="left:539px;top:313px;width:101px;height:18px;color:#1e2743;justify-content:flex-end;font-size:14px;padding-bottom:1px;"><span style="display:inline-block;transform:scaleX(0.915);transform-origin:100% 100%">$0.00</span></div>
<div class="t" style="left:643px;top:313px;width:101px;height:18px;color:#1e2743;justify-content:flex-end;font-size:14px;padding-bottom:1px;"><span style="display:inline-block;transform:scaleX(0.915);transform-origin:100% 100%">$241.00</span></div>
<div class="t" style="left:747px;top:313px;width:101px;height:18px;color:#1e2743;justify-content:flex-end;font-size:14px;padding-bottom:1px;"><span style="display:inline-block;transform:scaleX(0.915);transform-origin:100% 100%">$0.00</span></div>
<div class="t" style="left:851px;top:313px;width:101px;height:18px;color:#1e2743;justify-content:flex-end;font-size:14px;padding-bottom:1px;"><span style="display:inline-block;transform:scaleX(0.915);transform-origin:100% 100%">$234.00</span></div>
<div class="t" style="left:955px;top:313px;width:101px;height:18px;color:#1e2743;justify-content:flex-end;font-size:14px;padding-bottom:1px;"><span style="display:inline-block;transform:scaleX(0.915);transform-origin:100% 100%">$965.00</span></div>
<div class="t" style="left:1059px;top:313px;width:101px;height:18px;color:#1e2743;justify-content:flex-end;font-size:14px;padding-bottom:1px;"><span style="display:inline-block;transform:scaleX(0.915);transform-origin:100% 100%">$555.00</span></div>
<div class="t" style="left:68px;top:332px;width:155px;height:18px;color:#1e2743;">收入点 3</div>
<div class="t" style="left:227px;top:332px;width:101px;height:18px;color:#1e2743;justify-content:flex-end;font-size:14px;padding-bottom:1px;"><span style="display:inline-block;transform:scaleX(0.915);transform-origin:100% 100%">$4,622.00</span></div>
<div class="t" style="left:331px;top:332px;width:101px;height:18px;color:#1e2743;justify-content:flex-end;font-size:14px;padding-bottom:1px;"><span style="display:inline-block;transform:scaleX(0.915);transform-origin:100% 100%">$345.00</span></div>
<div class="t" style="left:435px;top:332px;width:101px;height:18px;color:#1e2743;justify-content:flex-end;font-size:14px;padding-bottom:1px;"><span style="display:inline-block;transform:scaleX(0.915);transform-origin:100% 100%">$262.00</span></div>
<div class="t" style="left:539px;top:332px;width:101px;height:18px;color:#1e2743;justify-content:flex-end;font-size:14px;padding-bottom:1px;"><span style="display:inline-block;transform:scaleX(0.915);transform-origin:100% 100%">$0.00</span></div>
<div class="t" style="left:643px;top:332px;width:101px;height:18px;color:#1e2743;justify-content:flex-end;font-size:14px;padding-bottom:1px;"><span style="display:inline-block;transform:scaleX(0.915);transform-origin:100% 100%">$134.00</span></div>
<div class="t" style="left:747px;top:332px;width:101px;height:18px;color:#1e2743;justify-content:flex-end;font-size:14px;padding-bottom:1px;"><span style="display:inline-block;transform:scaleX(0.915);transform-origin:100% 100%">$345.00</span></div>
<div class="t" style="left:851px;top:332px;width:101px;height:18px;color:#1e2743;justify-content:flex-end;font-size:14px;padding-bottom:1px;"><span style="display:inline-block;transform:scaleX(0.915);transform-origin:100% 100%">$215.00</span></div>
<div class="t" style="left:955px;top:332px;width:101px;height:18px;color:#1e2743;justify-content:flex-end;font-size:14px;padding-bottom:1px;"><span style="display:inline-block;transform:scaleX(0.915);transform-origin:100% 100%">$565.00</span></div>
<div class="t" style="left:1059px;top:332px;width:101px;height:18px;color:#1e2743;justify-content:flex-end;font-size:14px;padding-bottom:1px;"><span style="display:inline-block;transform:scaleX(0.915);transform-origin:100% 100%">$909.00</span></div>
<div class="t" style="left:68px;top:351px;width:155px;height:18px;color:#1e2743;">收入点 4</div>
<div class="t" style="left:227px;top:351px;width:101px;height:18px;color:#1e2743;justify-content:flex-end;font-size:14px;padding-bottom:1px;"><span style="display:inline-block;transform:scaleX(0.915);transform-origin:100% 100%">$452.00</span></div>
<div class="t" style="left:331px;top:351px;width:101px;height:18px;color:#1e2743;justify-content:flex-end;font-size:14px;padding-bottom:1px;"><span style="display:inline-block;transform:scaleX(0.915);transform-origin:100% 100%">$12.00</span></div>
<div class="t" style="left:435px;top:351px;width:101px;height:18px;color:#1e2743;justify-content:flex-end;font-size:14px;padding-bottom:1px;"><span style="display:inline-block;transform:scaleX(0.915);transform-origin:100% 100%">$144.00</span></div>
<div class="t" style="left:539px;top:351px;width:101px;height:18px;color:#1e2743;justify-content:flex-end;font-size:14px;padding-bottom:1px;"><span style="display:inline-block;transform:scaleX(0.915);transform-origin:100% 100%">$50.00</span></div>
<div class="t" style="left:643px;top:351px;width:101px;height:18px;color:#1e2743;justify-content:flex-end;font-size:14px;padding-bottom:1px;"><span style="display:inline-block;transform:scaleX(0.915);transform-origin:100% 100%">$132.00</span></div>
<div class="t" style="left:747px;top:351px;width:101px;height:18px;color:#1e2743;justify-content:flex-end;font-size:14px;padding-bottom:1px;"><span style="display:inline-block;transform:scaleX(0.915);transform-origin:100% 100%">$36.00</span></div>
<div class="t" style="left:851px;top:351px;width:101px;height:18px;color:#1e2743;justify-content:flex-end;font-size:14px;padding-bottom:1px;"><span style="display:inline-block;transform:scaleX(0.915);transform-origin:100% 100%">$76.00</span></div>
<div class="t" style="left:955px;top:351px;width:101px;height:18px;color:#1e2743;justify-content:flex-end;font-size:14px;padding-bottom:1px;"><span style="display:inline-block;transform:scaleX(0.915);transform-origin:100% 100%">$54.00</span></div>
<div class="t" style="left:1059px;top:351px;width:101px;height:18px;color:#1e2743;justify-content:flex-end;font-size:14px;padding-bottom:1px;"><span style="display:inline-block;transform:scaleX(0.915);transform-origin:100% 100%">$309.00</span></div>
<div class="t" style="left:68px;top:370px;width:155px;height:18px;color:#1e2743;">收入点 5</div>
<div class="t" style="left:227px;top:370px;width:101px;height:18px;color:#1e2743;justify-content:flex-end;font-size:14px;padding-bottom:1px;"><span style="display:inline-block;transform:scaleX(0.915);transform-origin:100% 100%">$120.00</span></div>
<div class="t" style="left:331px;top:370px;width:101px;height:18px;color:#1e2743;justify-content:flex-end;font-size:14px;padding-bottom:1px;"><span style="display:inline-block;transform:scaleX(0.915);transform-origin:100% 100%">$646.00</span></div>
<div class="t" style="left:435px;top:370px;width:101px;height:18px;color:#1e2743;justify-content:flex-end;font-size:14px;padding-bottom:1px;"><span style="display:inline-block;transform:scaleX(0.915);transform-origin:100% 100%">$300.00</span></div>
<div class="t" style="left:539px;top:370px;width:101px;height:18px;color:#1e2743;justify-content:flex-end;font-size:14px;padding-bottom:1px;"><span style="display:inline-block;transform:scaleX(0.915);transform-origin:100% 100%">$233.00</span></div>
<div class="t" style="left:643px;top:370px;width:101px;height:18px;color:#1e2743;justify-content:flex-end;font-size:14px;padding-bottom:1px;"><span style="display:inline-block;transform:scaleX(0.915);transform-origin:100% 100%">$87.00</span></div>
<div class="t" style="left:747px;top:370px;width:101px;height:18px;color:#1e2743;justify-content:flex-end;font-size:14px;padding-bottom:1px;"><span style="display:inline-block;transform:scaleX(0.915);transform-origin:100% 100%">$563.00</span></div>
<div class="t" style="left:851px;top:370px;width:101px;height:18px;color:#1e2743;justify-content:flex-end;font-size:14px;padding-bottom:1px;"><span style="display:inline-block;transform:scaleX(0.915);transform-origin:100% 100%">$677.00</span></div>
<div class="t" style="left:955px;top:370px;width:101px;height:18px;color:#1e2743;justify-content:flex-end;font-size:14px;padding-bottom:1px;"><span style="display:inline-block;transform:scaleX(0.915);transform-origin:100% 100%">$97.00</span></div>
<div class="t" style="left:1059px;top:370px;width:101px;height:18px;color:#1e2743;justify-content:flex-end;font-size:14px;padding-bottom:1px;"><span style="display:inline-block;transform:scaleX(0.915);transform-origin:100% 100%">$234.00</span></div>
<div class="t" style="left:68px;top:389px;width:155px;height:18px;color:#1e2743;">收入点 6</div>
<div class="t" style="left:227px;top:389px;width:101px;height:18px;color:#1e2743;justify-content:flex-end;font-size:14px;padding-bottom:1px;"><span style="display:inline-block;transform:scaleX(0.915);transform-origin:100% 100%">$90.00</span></div>
<div class="t" style="left:331px;top:389px;width:101px;height:18px;color:#1e2743;justify-content:flex-end;font-size:14px;padding-bottom:1px;"><span style="display:inline-block;transform:scaleX(0.915);transform-origin:100% 100%">$3,567.00</span></div>
<div class="t" style="left:435px;top:389px;width:101px;height:18px;color:#1e2743;justify-content:flex-end;font-size:14px;padding-bottom:1px;"><span style="display:inline-block;transform:scaleX(0.915);transform-origin:100% 100%">$1,000.00</span></div>
<div class="t" style="left:539px;top:389px;width:101px;height:18px;color:#1e2743;justify-content:flex-end;font-size:14px;padding-bottom:1px;"><span style="display:inline-block;transform:scaleX(0.915);transform-origin:100% 100%">$2,000.00</span></div>
<div class="t" style="left:643px;top:389px;width:101px;height:18px;color:#1e2743;justify-content:flex-end;font-size:14px;padding-bottom:1px;"><span style="display:inline-block;transform:scaleX(0.915);transform-origin:100% 100%">$565.00</span></div>
<div class="t" style="left:747px;top:389px;width:101px;height:18px;color:#1e2743;justify-content:flex-end;font-size:14px;padding-bottom:1px;"><span style="display:inline-block;transform:scaleX(0.915);transform-origin:100% 100%">$783.00</span></div>
<div class="t" style="left:851px;top:389px;width:101px;height:18px;color:#1e2743;justify-content:flex-end;font-size:14px;padding-bottom:1px;"><span style="display:inline-block;transform:scaleX(0.915);transform-origin:100% 100%">$665.00</span></div>
<div class="t" style="left:955px;top:389px;width:101px;height:18px;color:#1e2743;justify-content:flex-end;font-size:14px;padding-bottom:1px;"><span style="display:inline-block;transform:scaleX(0.915);transform-origin:100% 100%">$66.00</span></div>
<div class="t" style="left:1059px;top:389px;width:101px;height:18px;color:#1e2743;justify-content:flex-end;font-size:14px;padding-bottom:1px;"><span style="display:inline-block;transform:scaleX(0.915);transform-origin:100% 100%">$1,000.00</span></div>
<div class="t" style="left:68px;top:408px;width:155px;height:18px;color:#1e2743;">收入点 7</div>
<div class="t" style="left:227px;top:408px;width:101px;height:18px;color:#1e2743;justify-content:flex-end;font-size:14px;padding-bottom:1px;"><span style="display:inline-block;transform:scaleX(0.915);transform-origin:100% 100%">$0.00</span></div>
<div class="t" style="left:331px;top:408px;width:101px;height:18px;color:#1e2743;justify-content:flex-end;font-size:14px;padding-bottom:1px;"><span style="display:inline-block;transform:scaleX(0.915);transform-origin:100% 100%">$4,757.00</span></div>
<div class="t" style="left:435px;top:408px;width:101px;height:18px;color:#1e2743;justify-content:flex-end;font-size:14px;padding-bottom:1px;"><span style="display:inline-block;transform:scaleX(0.915);transform-origin:100% 100%">$345.00</span></div>
<div class="t" style="left:539px;top:408px;width:101px;height:18px;color:#1e2743;justify-content:flex-end;font-size:14px;padding-bottom:1px;"><span style="display:inline-block;transform:scaleX(0.915);transform-origin:100% 100%">$323.00</span></div>
<div class="t" style="left:643px;top:408px;width:101px;height:18px;color:#1e2743;justify-content:flex-end;font-size:14px;padding-bottom:1px;"><span style="display:inline-block;transform:scaleX(0.915);transform-origin:100% 100%">$456.00</span></div>
<div class="t" style="left:747px;top:408px;width:101px;height:18px;color:#1e2743;justify-content:flex-end;font-size:14px;padding-bottom:1px;"><span style="display:inline-block;transform:scaleX(0.915);transform-origin:100% 100%">$75.00</span></div>
<div class="t" style="left:851px;top:408px;width:101px;height:18px;color:#1e2743;justify-content:flex-end;font-size:14px;padding-bottom:1px;"><span style="display:inline-block;transform:scaleX(0.915);transform-origin:100% 100%">$722.00</span></div>
<div class="t" style="left:955px;top:408px;width:101px;height:18px;color:#1e2743;justify-content:flex-end;font-size:14px;padding-bottom:1px;"><span style="display:inline-block;transform:scaleX(0.915);transform-origin:100% 100%">$522.00</span></div>
<div class="t" style="left:1059px;top:408px;width:101px;height:18px;color:#1e2743;justify-content:flex-end;font-size:14px;padding-bottom:1px;"><span style="display:inline-block;transform:scaleX(0.915);transform-origin:100% 100%">$0.00</span></div>
<div class="t" style="left:68px;top:427px;width:155px;height:18px;color:#1e2743;">收入点 8</div>
<div class="t" style="left:227px;top:427px;width:101px;height:18px;color:#1e2743;justify-content:flex-end;font-size:14px;padding-bottom:1px;"><span style="display:inline-block;transform:scaleX(0.915);transform-origin:100% 100%">$0.00</span></div>
<div class="t" style="left:331px;top:427px;width:101px;height:18px;color:#1e2743;justify-content:flex-end;font-size:14px;padding-bottom:1px;"><span style="display:inline-block;transform:scaleX(0.915);transform-origin:100% 100%">$34.00</span></div>
<div class="t" style="left:435px;top:427px;width:101px;height:18px;color:#1e2743;justify-content:flex-end;font-size:14px;padding-bottom:1px;"><span style="display:inline-block;transform:scaleX(0.915);transform-origin:100% 100%">$501.00</span></div>
<div class="t" style="left:539px;top:427px;width:101px;height:18px;color:#1e2743;justify-content:flex-end;font-size:14px;padding-bottom:1px;"><span style="display:inline-block;transform:scaleX(0.915);transform-origin:100% 100%">$122.00</span></div>
<div class="t" style="left:643px;top:427px;width:101px;height:18px;color:#1e2743;justify-content:flex-end;font-size:14px;padding-bottom:1px;"><span style="display:inline-block;transform:scaleX(0.915);transform-origin:100% 100%">$457.00</span></div>
<div class="t" style="left:747px;top:427px;width:101px;height:18px;color:#1e2743;justify-content:flex-end;font-size:14px;padding-bottom:1px;"><span style="display:inline-block;transform:scaleX(0.915);transform-origin:100% 100%">$344.00</span></div>
<div class="t" style="left:851px;top:427px;width:101px;height:18px;color:#1e2743;justify-content:flex-end;font-size:14px;padding-bottom:1px;"><span style="display:inline-block;transform:scaleX(0.915);transform-origin:100% 100%">$704.00</span></div>
<div class="t" style="left:955px;top:427px;width:101px;height:18px;color:#1e2743;justify-content:flex-end;font-size:14px;padding-bottom:1px;"><span style="display:inline-block;transform:scaleX(0.915);transform-origin:100% 100%">$245.00</span></div>
<div class="t" style="left:1059px;top:427px;width:101px;height:18px;color:#1e2743;justify-content:flex-end;font-size:14px;padding-bottom:1px;"><span style="display:inline-block;transform:scaleX(0.915);transform-origin:100% 100%">$0.00</span></div>
<div class="t" style="left:68px;top:446px;width:155px;height:18px;color:#1e2743;">收入点 9</div>
<div class="t" style="left:227px;top:446px;width:101px;height:18px;color:#1e2743;justify-content:flex-end;font-size:14px;padding-bottom:1px;"><span style="display:inline-block;transform:scaleX(0.915);transform-origin:100% 100%">$345.00</span></div>
<div class="t" style="left:331px;top:446px;width:101px;height:18px;color:#1e2743;justify-content:flex-end;font-size:14px;padding-bottom:1px;"><span style="display:inline-block;transform:scaleX(0.915);transform-origin:100% 100%">$235.00</span></div>
<div class="t" style="left:435px;top:446px;width:101px;height:18px;color:#1e2743;justify-content:flex-end;font-size:14px;padding-bottom:1px;"><span style="display:inline-block;transform:scaleX(0.915);transform-origin:100% 100%">$0.00</span></div>
<div class="t" style="left:539px;top:446px;width:101px;height:18px;color:#1e2743;justify-content:flex-end;font-size:14px;padding-bottom:1px;"><span style="display:inline-block;transform:scaleX(0.915);transform-origin:100% 100%">$100.00</span></div>
<div class="t" style="left:643px;top:446px;width:101px;height:18px;color:#1e2743;justify-content:flex-end;font-size:14px;padding-bottom:1px;"><span style="display:inline-block;transform:scaleX(0.915);transform-origin:100% 100%">$340.00</span></div>
<div class="t" style="left:747px;top:446px;width:101px;height:18px;color:#1e2743;justify-content:flex-end;font-size:14px;padding-bottom:1px;"><span style="display:inline-block;transform:scaleX(0.915);transform-origin:100% 100%">$34.00</span></div>
<div class="t" style="left:851px;top:446px;width:101px;height:18px;color:#1e2743;justify-content:flex-end;font-size:14px;padding-bottom:1px;"><span style="display:inline-block;transform:scaleX(0.915);transform-origin:100% 100%">$45.00</span></div>
<div class="t" style="left:955px;top:446px;width:101px;height:18px;color:#1e2743;justify-content:flex-end;font-size:14px;padding-bottom:1px;"><span style="display:inline-block;transform:scaleX(0.915);transform-origin:100% 100%">$345.00</span></div>
<div class="t" style="left:1059px;top:446px;width:101px;height:18px;color:#1e2743;justify-content:flex-end;font-size:14px;padding-bottom:1px;"><span style="display:inline-block;transform:scaleX(0.915);transform-origin:100% 100%">$454.00</span></div>
<div class="t" style="left:69px;top:465px;width:155px;height:18px;color:#1e2743;font-weight:bold;font-size:14px;padding-bottom:2px;letter-spacing:1px">总计</div>
<div class="t" style="left:227px;top:465px;width:101px;height:18px;color:#1e2743;justify-content:flex-end;font-weight:bold;font-size:15px;padding-bottom:1px;"><span style="display:inline-block;transform:scaleX(0.935);transform-origin:100% 100%">$7,398.00</span></div>
<div class="t" style="left:331px;top:465px;width:101px;height:18px;color:#1e2743;justify-content:flex-end;font-weight:bold;font-size:15px;padding-bottom:1px;"><span style="display:inline-block;transform:scaleX(0.935);transform-origin:100% 100%">$11,061.00</span></div>
<div class="t" style="left:435px;top:465px;width:101px;height:18px;color:#1e2743;justify-content:flex-end;font-weight:bold;font-size:15px;padding-bottom:1px;"><span style="display:inline-block;transform:scaleX(0.935);transform-origin:100% 100%">$3,786.00</span></div>
<div class="t" style="left:539px;top:465px;width:101px;height:18px;color:#1e2743;justify-content:flex-end;font-weight:bold;font-size:15px;padding-bottom:1px;"><span style="display:inline-block;transform:scaleX(0.935);transform-origin:100% 100%">$4,028.00</span></div>
<div class="t" style="left:643px;top:465px;width:101px;height:18px;color:#1e2743;justify-content:flex-end;font-weight:bold;font-size:15px;padding-bottom:1px;"><span style="display:inline-block;transform:scaleX(0.935);transform-origin:100% 100%">$3,412.00</span></div>
<div class="t" style="left:747px;top:465px;width:101px;height:18px;color:#1e2743;justify-content:flex-end;font-weight:bold;font-size:15px;padding-bottom:1px;"><span style="display:inline-block;transform:scaleX(0.935);transform-origin:100% 100%">$3,180.00</span></div>
<div class="t" style="left:851px;top:465px;width:101px;height:18px;color:#1e2743;justify-content:flex-end;font-weight:bold;font-size:15px;padding-bottom:1px;"><span style="display:inline-block;transform:scaleX(0.935);transform-origin:100% 100%">$4,338.00</span></div>
<div class="t" style="left:955px;top:465px;width:101px;height:18px;color:#1e2743;justify-content:flex-end;font-weight:bold;font-size:15px;padding-bottom:1px;"><span style="display:inline-block;transform:scaleX(0.935);transform-origin:100% 100%">$3,859.00</span></div>
<div class="t" style="left:1059px;top:465px;width:101px;height:18px;color:#1e2743;justify-content:flex-end;font-weight:bold;font-size:15px;padding-bottom:1px;"><span style="display:inline-block;transform:scaleX(0.935);transform-origin:100% 100%">$4,461.00</span></div>
<div class="t" style="left:68px;top:556px;width:155px;height:18px;color:#20404a;">支出点 1</div>
<div class="t" style="left:227px;top:556px;width:101px;height:18px;color:#20404a;justify-content:flex-end;font-size:14px;padding-bottom:1px;"><span style="display:inline-block;transform:scaleX(0.915);transform-origin:100% 100%">$43.00</span></div>
<div class="t" style="left:331px;top:556px;width:101px;height:18px;color:#20404a;justify-content:flex-end;font-size:14px;padding-bottom:1px;"><span style="display:inline-block;transform:scaleX(0.915);transform-origin:100% 100%">$543.00</span></div>
<div class="t" style="left:435px;top:556px;width:101px;height:18px;color:#20404a;justify-content:flex-end;font-size:14px;padding-bottom:1px;"><span style="display:inline-block;transform:scaleX(0.915);transform-origin:100% 100%">$98.00</span></div>
<div class="t" style="left:539px;top:556px;width:101px;height:18px;color:#20404a;justify-content:flex-end;font-size:14px;padding-bottom:1px;"><span style="display:inline-block;transform:scaleX(0.915);transform-origin:100% 100%">$90.00</span></div>
<div class="t" style="left:643px;top:556px;width:101px;height:18px;color:#20404a;justify-content:flex-end;font-size:14px;padding-bottom:1px;"><span style="display:inline-block;transform:scaleX(0.915);transform-origin:100% 100%">$54.00</span></div>
<div class="t" style="left:747px;top:556px;width:101px;height:18px;color:#20404a;justify-content:flex-end;font-size:14px;padding-bottom:1px;"><span style="display:inline-block;transform:scaleX(0.915);transform-origin:100% 100%">$43.00</span></div>
<div class="t" style="left:851px;top:556px;width:101px;height:18px;color:#20404a;justify-content:flex-end;font-size:14px;padding-bottom:1px;"><span style="display:inline-block;transform:scaleX(0.915);transform-origin:100% 100%">$434.00</span></div>
<div class="t" style="left:955px;top:556px;width:101px;height:18px;color:#20404a;justify-content:flex-end;font-size:14px;padding-bottom:1px;"><span style="display:inline-block;transform:scaleX(0.915);transform-origin:100% 100%">$23.00</span></div>
<div class="t" style="left:1059px;top:556px;width:101px;height:18px;color:#20404a;justify-content:flex-end;font-size:14px;padding-bottom:1px;"><span style="display:inline-block;transform:scaleX(0.915);transform-origin:100% 100%">$89.00</span></div>
<div class="t" style="left:68px;top:575px;width:155px;height:18px;color:#20404a;">支出点子项 1</div>
<div class="t" style="left:227px;top:575px;width:101px;height:18px;color:#20404a;justify-content:flex-end;font-size:14px;padding-bottom:1px;"><span style="display:inline-block;transform:scaleX(0.915);transform-origin:100% 100%">$345.00</span></div>
<div class="t" style="left:331px;top:575px;width:101px;height:18px;color:#20404a;justify-content:flex-end;font-size:14px;padding-bottom:1px;"><span style="display:inline-block;transform:scaleX(0.915);transform-origin:100% 100%">$45.00</span></div>
<div class="t" style="left:435px;top:575px;width:101px;height:18px;color:#20404a;justify-content:flex-end;font-size:14px;padding-bottom:1px;"><span style="display:inline-block;transform:scaleX(0.915);transform-origin:100% 100%">$45.00</span></div>
<div class="t" style="left:539px;top:575px;width:101px;height:18px;color:#20404a;justify-content:flex-end;font-size:14px;padding-bottom:1px;"><span style="display:inline-block;transform:scaleX(0.915);transform-origin:100% 100%">$45.00</span></div>
<div class="t" style="left:643px;top:575px;width:101px;height:18px;color:#20404a;justify-content:flex-end;font-size:14px;padding-bottom:1px;"><span style="display:inline-block;transform:scaleX(0.915);transform-origin:100% 100%">$98.00</span></div>
<div class="t" style="left:747px;top:575px;width:101px;height:18px;color:#20404a;justify-content:flex-end;font-size:14px;padding-bottom:1px;"><span style="display:inline-block;transform:scaleX(0.915);transform-origin:100% 100%">$341.00</span></div>
<div class="t" style="left:851px;top:575px;width:101px;height:18px;color:#20404a;justify-content:flex-end;font-size:14px;padding-bottom:1px;"><span style="display:inline-block;transform:scaleX(0.915);transform-origin:100% 100%">$23.00</span></div>
<div class="t" style="left:955px;top:575px;width:101px;height:18px;color:#20404a;justify-content:flex-end;font-size:14px;padding-bottom:1px;"><span style="display:inline-block;transform:scaleX(0.915);transform-origin:100% 100%">$233.00</span></div>
<div class="t" style="left:1059px;top:575px;width:101px;height:18px;color:#20404a;justify-content:flex-end;font-size:14px;padding-bottom:1px;"><span style="display:inline-block;transform:scaleX(0.915);transform-origin:100% 100%">$342.00</span></div>
<div class="t" style="left:68px;top:594px;width:155px;height:18px;color:#20404a;">支出点子项 2</div>
<div class="t" style="left:227px;top:594px;width:101px;height:18px;color:#20404a;justify-content:flex-end;font-size:14px;padding-bottom:1px;"><span style="display:inline-block;transform:scaleX(0.915);transform-origin:100% 100%">$342.00</span></div>
<div class="t" style="left:331px;top:594px;width:101px;height:18px;color:#20404a;justify-content:flex-end;font-size:14px;padding-bottom:1px;"><span style="display:inline-block;transform:scaleX(0.915);transform-origin:100% 100%">$345.00</span></div>
<div class="t" style="left:435px;top:594px;width:101px;height:18px;color:#20404a;justify-content:flex-end;font-size:14px;padding-bottom:1px;"><span style="display:inline-block;transform:scaleX(0.915);transform-origin:100% 100%">$354.00</span></div>
<div class="t" style="left:539px;top:594px;width:101px;height:18px;color:#20404a;justify-content:flex-end;font-size:14px;padding-bottom:1px;"><span style="display:inline-block;transform:scaleX(0.915);transform-origin:100% 100%">$356.00</span></div>
<div class="t" style="left:643px;top:594px;width:101px;height:18px;color:#20404a;justify-content:flex-end;font-size:14px;padding-bottom:1px;"><span style="display:inline-block;transform:scaleX(0.915);transform-origin:100% 100%">$398.00</span></div>
<div class="t" style="left:747px;top:594px;width:101px;height:18px;color:#20404a;justify-content:flex-end;font-size:14px;padding-bottom:1px;"><span style="display:inline-block;transform:scaleX(0.915);transform-origin:100% 100%">$341.00</span></div>
<div class="t" style="left:851px;top:594px;width:101px;height:18px;color:#20404a;justify-content:flex-end;font-size:14px;padding-bottom:1px;"><span style="display:inline-block;transform:scaleX(0.915);transform-origin:100% 100%">$241.00</span></div>
<div class="t" style="left:955px;top:594px;width:101px;height:18px;color:#20404a;justify-content:flex-end;font-size:14px;padding-bottom:1px;"><span style="display:inline-block;transform:scaleX(0.915);transform-origin:100% 100%">$65.00</span></div>
<div class="t" style="left:1059px;top:594px;width:101px;height:18px;color:#20404a;justify-content:flex-end;font-size:14px;padding-bottom:1px;"><span style="display:inline-block;transform:scaleX(0.915);transform-origin:100% 100%">$24.00</span></div>
<div class="t" style="left:68px;top:613px;width:155px;height:18px;color:#20404a;">支出点子项 3</div>
<div class="t" style="left:227px;top:613px;width:101px;height:18px;color:#20404a;justify-content:flex-end;font-size:14px;padding-bottom:1px;"><span style="display:inline-block;transform:scaleX(0.915);transform-origin:100% 100%">$12.00</span></div>
<div class="t" style="left:331px;top:613px;width:101px;height:18px;color:#20404a;justify-content:flex-end;font-size:14px;padding-bottom:1px;"><span style="display:inline-block;transform:scaleX(0.915);transform-origin:100% 100%">$234.00</span></div>
<div class="t" style="left:435px;top:613px;width:101px;height:18px;color:#20404a;justify-content:flex-end;font-size:14px;padding-bottom:1px;"><span style="display:inline-block;transform:scaleX(0.915);transform-origin:100% 100%">$345.00</span></div>
<div class="t" style="left:539px;top:613px;width:101px;height:18px;color:#20404a;justify-content:flex-end;font-size:14px;padding-bottom:1px;"><span style="display:inline-block;transform:scaleX(0.915);transform-origin:100% 100%">$90.00</span></div>
<div class="t" style="left:643px;top:613px;width:101px;height:18px;color:#20404a;justify-content:flex-end;font-size:14px;padding-bottom:1px;"><span style="display:inline-block;transform:scaleX(0.915);transform-origin:100% 100%">$93.00</span></div>
<div class="t" style="left:747px;top:613px;width:101px;height:18px;color:#20404a;justify-content:flex-end;font-size:14px;padding-bottom:1px;"><span style="display:inline-block;transform:scaleX(0.915);transform-origin:100% 100%">$34.00</span></div>
<div class="t" style="left:851px;top:613px;width:101px;height:18px;color:#20404a;justify-content:flex-end;font-size:14px;padding-bottom:1px;"><span style="display:inline-block;transform:scaleX(0.915);transform-origin:100% 100%">$34.00</span></div>
<div class="t" style="left:955px;top:613px;width:101px;height:18px;color:#20404a;justify-content:flex-end;font-size:14px;padding-bottom:1px;"><span style="display:inline-block;transform:scaleX(0.915);transform-origin:100% 100%">$65.00</span></div>
<div class="t" style="left:1059px;top:613px;width:101px;height:18px;color:#20404a;justify-content:flex-end;font-size:14px;padding-bottom:1px;"><span style="display:inline-block;transform:scaleX(0.915);transform-origin:100% 100%">$23.00</span></div>
<div class="t" style="left:68px;top:632px;width:155px;height:18px;color:#20404a;">支出点子项 4</div>
<div class="t" style="left:227px;top:632px;width:101px;height:18px;color:#20404a;justify-content:flex-end;font-size:14px;padding-bottom:1px;"><span style="display:inline-block;transform:scaleX(0.915);transform-origin:100% 100%">$97.00</span></div>
<div class="t" style="left:331px;top:632px;width:101px;height:18px;color:#20404a;justify-content:flex-end;font-size:14px;padding-bottom:1px;"><span style="display:inline-block;transform:scaleX(0.915);transform-origin:100% 100%">$23.00</span></div>
<div class="t" style="left:435px;top:632px;width:101px;height:18px;color:#20404a;justify-content:flex-end;font-size:14px;padding-bottom:1px;"><span style="display:inline-block;transform:scaleX(0.915);transform-origin:100% 100%">$34.00</span></div>
<div class="t" style="left:539px;top:632px;width:101px;height:18px;color:#20404a;justify-content:flex-end;font-size:14px;padding-bottom:1px;"><span style="display:inline-block;transform:scaleX(0.915);transform-origin:100% 100%">$45.00</span></div>
<div class="t" style="left:643px;top:632px;width:101px;height:18px;color:#20404a;justify-content:flex-end;font-size:14px;padding-bottom:1px;"><span style="display:inline-block;transform:scaleX(0.915);transform-origin:100% 100%">$45.00</span></div>
<div class="t" style="left:747px;top:632px;width:101px;height:18px;color:#20404a;justify-content:flex-end;font-size:14px;padding-bottom:1px;"><span style="display:inline-block;transform:scaleX(0.915);transform-origin:100% 100%">$34.00</span></div>
<div class="t" style="left:851px;top:632px;width:101px;height:18px;color:#20404a;justify-content:flex-end;font-size:14px;padding-bottom:1px;"><span style="display:inline-block;transform:scaleX(0.915);transform-origin:100% 100%">$64.00</span></div>
<div class="t" style="left:955px;top:632px;width:101px;height:18px;color:#20404a;justify-content:flex-end;font-size:14px;padding-bottom:1px;"><span style="display:inline-block;transform:scaleX(0.915);transform-origin:100% 100%">$64.00</span></div>
<div class="t" style="left:1059px;top:632px;width:101px;height:18px;color:#20404a;justify-content:flex-end;font-size:14px;padding-bottom:1px;"><span style="display:inline-block;transform:scaleX(0.915);transform-origin:100% 100%">$90.00</span></div>
<div class="t" style="left:68px;top:651px;width:155px;height:18px;color:#20404a;">支出点子项 5</div>
<div class="t" style="left:227px;top:651px;width:101px;height:18px;color:#20404a;justify-content:flex-end;font-size:14px;padding-bottom:1px;"><span style="display:inline-block;transform:scaleX(0.915);transform-origin:100% 100%">$34.00</span></div>
<div class="t" style="left:331px;top:651px;width:101px;height:18px;color:#20404a;justify-content:flex-end;font-size:14px;padding-bottom:1px;"><span style="display:inline-block;transform:scaleX(0.915);transform-origin:100% 100%">$23.00</span></div>
<div class="t" style="left:435px;top:651px;width:101px;height:18px;color:#20404a;justify-content:flex-end;font-size:14px;padding-bottom:1px;"><span style="display:inline-block;transform:scaleX(0.915);transform-origin:100% 100%">$34.00</span></div>
<div class="t" style="left:539px;top:651px;width:101px;height:18px;color:#20404a;justify-content:flex-end;font-size:14px;padding-bottom:1px;"><span style="display:inline-block;transform:scaleX(0.915);transform-origin:100% 100%">$45.00</span></div>
<div class="t" style="left:643px;top:651px;width:101px;height:18px;color:#20404a;justify-content:flex-end;font-size:14px;padding-bottom:1px;"><span style="display:inline-block;transform:scaleX(0.915);transform-origin:100% 100%">$23.00</span></div>
<div class="t" style="left:747px;top:651px;width:101px;height:18px;color:#20404a;justify-content:flex-end;font-size:14px;padding-bottom:1px;"><span style="display:inline-block;transform:scaleX(0.915);transform-origin:100% 100%">$12.00</span></div>
<div class="t" style="left:851px;top:651px;width:101px;height:18px;color:#20404a;justify-content:flex-end;font-size:14px;padding-bottom:1px;"><span style="display:inline-block;transform:scaleX(0.915);transform-origin:100% 100%">$65.00</span></div>
<div class="t" style="left:955px;top:651px;width:101px;height:18px;color:#20404a;justify-content:flex-end;font-size:14px;padding-bottom:1px;"><span style="display:inline-block;transform:scaleX(0.915);transform-origin:100% 100%">$65.00</span></div>
<div class="t" style="left:1059px;top:651px;width:101px;height:18px;color:#20404a;justify-content:flex-end;font-size:14px;padding-bottom:1px;"><span style="display:inline-block;transform:scaleX(0.915);transform-origin:100% 100%">$54.00</span></div>
<div class="t" style="left:66px;top:484px;width:158px;height:47px;color:#1e2743;justify-content:flex-end;font-size:15px;line-height:17px;padding-bottom:1px">87</div>
</div>
<div class="ab" style="left:64px;top:482px;width:164px;height:51px;border:2px solid #3d7a52;box-sizing:border-box"></div><div class="ab" style="left:223px;top:528px;width:5px;height:5px;background:#3d7a52;border:1px solid #fff"></div>
<svg class="ab" style="left:0;top:0" width="1240" height="708" viewBox="0 0 1240 708" fill="none" stroke-linecap="round" stroke-linejoin="round">
<path d="M19.5 7 L27 10.5 L19.5 14 L12 10.5 Z" fill="#444" stroke="none"/>
<path d="M12.5 13.2 L19.5 16.5 L26.5 13.2 L27 14.2 L19.5 17.8 L12 14.2 Z" fill="#666" stroke="none"/>
<path d="M12.5 16.4 L19.5 19.7 L26.5 16.4 L27 17.4 L19.5 21 L12 17.4 Z" fill="#999" stroke="none"/>
<path d="M133.5 8.5h11l2.5 2.5v10h-13.5z M136.5 8.5v4h7v-4 M136.5 21v-5h8v5" stroke="#b0b0b0" stroke-width="1.2"/>
<path d="M171.5 11.5v-3.5h9v3.5 M171 18.5h-2.5v-7h15v7h-2.5 M171.5 16h9v5.5h-9z" stroke="#333" stroke-width="1.3"/>
<path d="M209 8l-3.5 3.5 3.5 3.5 M205.5 11.5h8a5 5 0 0 1 0 10h-2" stroke="#333" stroke-width="1.3"/>
<path d="M251 8l3.5 3.5-3.5 3.5 M254.5 11.5h-8a5 5 0 0 0 0 10h2" stroke="#b3b3b3" stroke-width="1.3"/>
<circle cx="278" cy="14" r="1.1" fill="#333" stroke="none"/>
<circle cx="283.5" cy="14" r="1.1" fill="#333" stroke="none"/>
<circle cx="289" cy="14" r="1.1" fill="#333" stroke="none"/>
<path d="M1125.5 35.5h5l1.5 2h7v3 M1125.5 35.5v12h4 M1125.5 40.5h13.5v3" stroke="#333" stroke-width="1.1"/>
<path d="M1132 48h7.5 M1137 45.5l2.5 2.5-2.5 2.5" stroke="#3f74d4" stroke-width="1.1"/>
<path d="M1168 34.5l2.2 4.6 5 .6-3.7 3.4 1 5-4.5-2.5-4.5 2.5 1-5-3.7-3.4 5-.6z" stroke="#333" stroke-width="1.1"/>
<circle cx="1203.5" cy="41.5" r="6" stroke="#333" stroke-width="1.2"/><path d="M1208 46l3.5 3.5" stroke="#333" stroke-width="1.2"/>
<path d="M30.5 81.5h-4a1 1 0 0 1-1-1v-6a1 1 0 0 1 1-1h6a1 1 0 0 1 1 1v4" stroke="#333" stroke-width="1.1"/>
<rect x="30.5" y="78.5" width="8" height="8" rx="1" stroke="#333" stroke-width="1.1"/>
<circle cx="61.5" cy="77.5" r="2" stroke="#333" stroke-width="1.1"/><circle cx="63.5" cy="84.5" r="2" stroke="#333" stroke-width="1.1"/>
<path d="M63 80.5L72 73 M68 79.5h6" stroke="#333" stroke-width="1.1"/>
<rect x="26.5" y="110.5" width="11.5" height="12.5" rx="1.2" stroke="#333" stroke-width="1.1"/>
<rect x="28.5" y="109" width="7.5" height="2.5" rx="1" stroke="#333" stroke-width="1.1" fill="#fff"/>
<path d="M29.5 115.5h5 M29.5 118.5h5" stroke="#333" stroke-width="1.1"/>
<path d="M61.5 108.5h9.5v8.5h-9.5z M61.5 115.5h9.5 M64.5 117v6.5h3v-6.5 M67.5 108.5v3 M69.5 108.5v2" stroke="#333" stroke-width="1.1"/>
<path d="M216 79.5l3 3 3-3" stroke="#444" fill="none" stroke-width="1.1"/>
<path d="M262 79.5l3 3 3-3" stroke="#444" fill="none" stroke-width="1.1"/>
<path d="M283.5 85.5l4.5-12 4.5 12 M285 81.5h6" stroke="#333" stroke-width="1.1"/>
<path d="M290.5 75.5l2.3-2.3 2.3 2.3" stroke="#3f74d4" stroke-width="1"/>
<path d="M310.5 85.5l3.5-9 3.5 9 M311.7 82.5h4.6" stroke="#333" stroke-width="1.1"/>
<path d="M316.5 74.5l2.2 2.2 2.2-2.2" stroke="#3f74d4" stroke-width="1"/>
<path d="M333.5 86l4.5-12 4.5 12 M335 82h6" stroke="#333" stroke-width="1.1"/>
<path d="M343.5 86l3-7 3 7 M344.5 83.5h4" stroke="#3f74d4" stroke-width="1.1"/>
<path d="M358 79l3 3 3-3" stroke="#444" fill="none" stroke-width="1.1"/>
<text x="105.5" y="122" font-family="Liberation Sans" font-size="16" fill="#333" stroke="#333" stroke-width="0.35">B</text>
<path d="M136 110.5h6 M132 121.5h6 M139 110.5l-4 11" stroke="#333" stroke-width="1.1"/>
<path d="M158.5 110v6a4.5 4.5 0 0 0 9 0v-6" stroke="#333" stroke-width="1.2"/><path d="M158 123.5h10" stroke="#3f74d4" stroke-width="1.2"/>
<path d="M192 111.5a4 2.5 0 0 0-8 0.5c0 2 8 2.5 8 5.5a4 2.5 0 0 1-8 0.5" stroke="#333" stroke-width="1.1"/><path d="M182.5 115.5h12" stroke="#3f74d4" stroke-width="1.1"/>
<path d="M207.5 122l4.5-12 4.5 12 M209 118h6" stroke="#333" stroke-width="1.1"/><path d="M219.5 117.5l1.5-1v6.5" stroke="#3f74d4" stroke-width="1.1"/>
<path d="M232 115l3 3 3-3" stroke="#444" fill="none" stroke-width="1.1"/>
<path d="M250.5 121.5l4.5-11.5 4.5 11.5 M252 117.5h6" stroke="#333" stroke-width="1.1"/>
<rect x="248" y="124" width="18" height="3" fill="#e8000b" stroke="none"/>
<path d="M276 115l3 3 3-3" stroke="#444" fill="none" stroke-width="1.1"/>
<path d="M295.5 107l4.5 4.5 M299.5 110.5l5 5-5.5 5.5a1.5 1.5 0 0 1-2 0l-5-5a1.5 1.5 0 0 1 0-2l5.5-5.5" stroke="#333" stroke-width="1.1"/>
<path d="M293 116h10l-4 4.5h-2z" fill="#888" stroke="none"/><circle cx="305" cy="120" r="1.2" fill="#999" stroke="none"/>
<rect x="290" y="124" width="18" height="3" fill="#f3e600" stroke="none"/>
<path d="M317 115l3 3 3-3" stroke="#444" fill="none" stroke-width="1.1"/>
<rect x="333.5" y="108.5" width="14" height="14" rx="1" stroke="#3f74d4" stroke-width="1.2"/>
<path d="M340.5 110.5v2 M340.5 114.5v2 M340.5 118.5v2 M335.5 115.5h2 M338.5 115.5h4 M343.5 115.5h2" stroke="#555" stroke-width="1"/>
<path d="M357 115l3 3 3-3" stroke="#444" fill="none" stroke-width="1.1"/>
<rect x="395.5" y="72.5" width="13" height="14" rx="1.5" stroke="#333" stroke-width="1.1"/>
<path d="M399.0 75.5h6 M399.0 77.5h6" stroke="#3f74d4" stroke-width="1"/>
<rect x="425.5" y="72.5" width="13" height="14" rx="1.5" stroke="#333" stroke-width="1.1"/>
<path d="M429.0 78.5h6 M429.0 80.5h6" stroke="#3f74d4" stroke-width="1"/>
<rect x="455.5" y="72.5" width="13" height="14" rx="1.5" stroke="#333" stroke-width="1.1"/>
<path d="M459.0 82.5h6 M459.0 84.5h6" stroke="#3f74d4" stroke-width="1"/>
<path d="M485.5 73.5h14 M485.5 81.5h4 M485.5 85.5h4" stroke="#333" stroke-width="1.1"/><path d="M485.5 77.5h11a3 3 0 0 1 0 6h-5 M493.5 81.5l-2 2 2 2" stroke="#3f74d4" stroke-width="1.1"/>
<g transform="rotate(-32 518.5 80)"><path d="M514.5 84.5l4-10 4 10 M515.8 81h5.4" stroke="#333" stroke-width="1.1"/></g><path d="M520.5 87.5l9.5-9.5 M525.5 77.5h4.5v4.5 M520.5 76.5l4.5-4 M521.5 73h3.5v3.5" stroke="#3f74d4" stroke-width="1.1"/>
<path d="M540 79l3 3 3-3" stroke="#444" fill="none" stroke-width="1.1"/>
<path d="M395.5 109.5h14 M395.5 113.5h9 M395.5 117.5h14 M395.5 121.5h9 " stroke="#333" stroke-width="1.1"/>
<path d="M425.5 109.5h14 M428.0 113.5h9 M425.5 117.5h14 M428.0 121.5h9 " stroke="#333" stroke-width="1.1"/>
<path d="M455.5 109.5h14 M460.5 113.5h9 M455.5 117.5h14 M460.5 121.5h9 " stroke="#333" stroke-width="1.1"/>
<path d="M485.5 109.5h14 M485.5 113.5h14 M485.5 117.5h14 M485.5 121.5h14 " stroke="#333" stroke-width="1.1"/>
<rect x="514.5" y="108.5" width="16" height="14" rx="1.2" stroke="#333" stroke-width="1.1"/><path d="M522.5 108.5v3.5 M522.5 119v3.5" stroke="#333" stroke-width="1.1"/><rect x="514.5" y="111.5" width="16" height="7.5" stroke="#3f74d4" stroke-width="1.1"/><path d="M516.8 115.3h4 M518.6 113.5l-1.8 1.8 1.8 1.8 M524.2 115.3h4 M526.4 113.5l1.8 1.8-1.8 1.8" stroke="#3f74d4" stroke-width="1"/>
<path d="M540 115l3 3 3-3" stroke="#444" fill="none" stroke-width="1.1"/>
<path d="M561.5 109v9 M564.5 109v9 M565.5 108.5h-6a2.5 2.5 0 0 0 0 5h2" stroke="#333" stroke-width="1.1"/><path d="M554 122.5h16 M556 120.5l-2 2 2 2 M568 120.5l2 2-2 2" stroke="#3f74d4" stroke-width="1"/>
<path d="M580 115l3 3 3-3" stroke="#444" fill="none" stroke-width="1.1"/>
<path d="M629.5 75v-2.5h-12l6 7.5-6 7.5h12v-2.5" stroke="#333" stroke-width="1.1"/>
<path d="M640 79l3 3 3-3" stroke="#444" fill="none" stroke-width="1.1"/>
<rect x="656.5" y="72.5" width="12.5" height="15" rx="1" stroke="#333" stroke-width="1.1"/><path d="M656.5 75.5h12.5" stroke="#333" stroke-width="1.1"/><path d="M662.7 78v6 M659.5 81l3.2 3.2 3.2-3.2" stroke="#3f74d4" stroke-width="1.1"/>
<path d="M680 79l3 3 3-3" stroke="#444" fill="none" stroke-width="1.1"/>
<path d="M618.5 111.5h12v11h-12l-3-5.5z" stroke="#333" stroke-width="1.1"/><circle cx="619.5" cy="116.5" r="1" stroke="#333" stroke-width="1"/>
<path d="M640 115l3 3 3-3" stroke="#444" fill="none" stroke-width="1.1"/>
<path d="M660.5 122.5l-5-5 8-8 5 5-8 8z M659.5 113.5l5 5 M660.5 122.5h8.5" stroke="#333" stroke-width="1.1"/>
<path d="M680 115l3 3 3-3" stroke="#444" fill="none" stroke-width="1.1"/>
<text x="716.5" y="80.5" font-family="Liberation Sans" font-size="9.5" fill="#3f74d4" stroke="none">A</text><text x="716.8" y="88.5" font-family="Liberation Sans" font-size="9.5" fill="#333" stroke="none">Z</text>
<path d="M727.5 73v14.5 M724.5 84.5l3 3 3-3" stroke="#333" stroke-width="1.1"/>
<text x="756.8" y="80.5" font-family="Liberation Sans" font-size="9.5" fill="#333" stroke="none">Z</text><text x="756.5" y="88.5" font-family="Liberation Sans" font-size="9.5" fill="#3f74d4" stroke="none">A</text>
<path d="M767.5 73v14.5 M764.5 84.5l3 3 3-3" stroke="#333" stroke-width="1.1"/>
<path d="M717 109.5h14l-5.5 6.5v7l-3-1v-6z" stroke="#333" stroke-width="1.1"/>
<path d="M757 109.5h13.5l-4 5 M757 109.5l5 6v6.5" stroke="#aaa" stroke-width="1.1"/><circle cx="767.5" cy="120" r="3.6" fill="#f4a3a8" stroke="none"/><path d="M766.3 118.8l2.4 2.4 M768.7 118.8l-2.4 2.4" stroke="#fff" stroke-width="0.9"/>
<path d="M939.5 79.5l3 3 3-3" stroke="#444" fill="none" stroke-width="1.1"/>
<rect x="801.5" y="111.5" width="15" height="9" rx="1" stroke="#333" stroke-width="1.1"/><circle cx="804.5" cy="116" r=".8" fill="#333" stroke="none"/><circle cx="813.5" cy="116" r=".8" fill="#333" stroke="none"/><circle cx="809" cy="116" r="1.4" stroke="#333" stroke-width="1"/>
<path d="M826 115l3 3 3-3" stroke="#444" fill="none" stroke-width="1.1"/>
<circle cx="846.5" cy="112.5" r="1.8" stroke="#333" stroke-width="1.1"/><circle cx="853.5" cy="119.5" r="1.8" stroke="#333" stroke-width="1.1"/><path d="M844 121.5l11-11" stroke="#333" stroke-width="1.1"/>
<path d="M877.5 118.5a5 5 0 1 1 5 0.3l-3 3.7z" stroke="#333" stroke-width="1.1"/>
<circle cx="904" cy="113.5" r=".9" fill="#333" stroke="none"/><text x="905.5" y="115" font-family="Liberation Sans" font-size="10" fill="#333" stroke="none">0</text>
<path d="M904.5 120.5h13.5 M907 118l-2.5 2.5 2.5 2.5" stroke="#3f74d4" stroke-width="1.1"/>
<circle cx="934" cy="113.5" r=".9" fill="#333" stroke="none"/><text x="935" y="115" font-family="Liberation Sans" font-size="10" fill="#333" stroke="none">00</text>
<path d="M933.5 120.5h13.5 M944.5 118l2.5 2.5-2.5 2.5" stroke="#3f74d4" stroke-width="1.1"/>
<path d="M978.5 73.5h10v5 M978.5 73.5v13h5 M978.5 77.5h10 M982.5 73.5v13" stroke="#333" stroke-width="1.1"/>
<circle cx="989" cy="83" r="4.3" fill="#3f74d4" stroke="#fff" stroke-width="1"/>
<path d="M989 81v4 M987 83h4" stroke="#fff" stroke-width="1.1"/>
<path d="M978.5 109.5h10v5 M978.5 109.5v13h5 M978.5 113.5h10 M982.5 109.5v13" stroke="#333" stroke-width="1.1"/>
<circle cx="989" cy="119" r="4.3" fill="#e8333a" stroke="#fff" stroke-width="1"/>
<path d="M987.6 117.6l2.8 2.8 M990.4 117.6l-2.8 2.8" stroke="#fff" stroke-width="1.1"/>
<path d="M1002 79l3 3 3-3" stroke="#444" fill="none" stroke-width="1.1"/>
<path d="M1002 115l3 3 3-3" stroke="#444" fill="none" stroke-width="1.1"/>
<path d="M1040.5 73.5h12v5 M1040.5 73.5v13h4 M1040.5 77.5h12" stroke="#333" stroke-width="1.1"/><path d="M1041 78h11v3h-11z M1041 82h4v4h-4z" fill="#777" stroke="none"/><rect x="1045.5" y="80.5" width="9" height="8" rx="1" fill="#fff" stroke="#333" stroke-width="1.1"/><path d="M1048.5 82.5l3 2-3 2" stroke="#333" stroke-width="1"/>
<path d="M1064 79l3 3 3-3" stroke="#444" fill="none" stroke-width="1.1"/>
<rect x="1038.5" y="109.5" width="15" height="13" rx="1" stroke="#333" stroke-width="1.1"/><path d="M1038.5 113.5h15 M1038.5 118h15 M1043.5 109.5v13 M1048.5 109.5v13" stroke="#333" stroke-width="1.1"/>
<path d="M1064 115l3 3 3-3" stroke="#444" fill="none" stroke-width="1.1"/>
<circle cx="1201" cy="84" r="1.3" fill="#333" stroke="none"/>
<circle cx="1207" cy="84" r="1.3" fill="#333" stroke="none"/>
<circle cx="1213" cy="84" r="1.3" fill="#333" stroke="none"/>
<path d="M128 159l3 3 3-3" stroke="#555" fill="none" stroke-width="1.1"/>
<path d="M1189 159l3 3 3-3" stroke="#555" fill="none" stroke-width="1.1"/>
<path d="M51 191h11v-11z" fill="#9a9a9a" stroke="none"/>
<path d="M157.5 154.8c-1.5-0.8-3 0-3.3 1.8l-1.6 9.8c-0.3 1.8-1.6 2.4-2.8 1.8 M151.5 159.5h4.5" stroke="#555" stroke-width="1.1"/>
<path d="M157.5 160.5l5 5.5 M162.5 160.5l-5 5.5" stroke="#555" stroke-width="1.1"/>
<circle cx="19.5" cy="175.5" r="5.6" stroke="#444" stroke-width="1.2"/><path d="M23.7 179.7l3.3 3.3" stroke="#444" stroke-width="1.2"/>
<path d="M12.5 203.5h15v10h-9l-3 3v-3h-3z M15.5 207.5h9 M15.5 210.5h6" stroke="#444" stroke-width="1.1"/>
<path d="M14 249a7.5 7.5 0 1 1 3 2.2l-4.5 1z" stroke="#444" stroke-width="1.1"/><circle cx="16.5" cy="244" r=".9" fill="#444" stroke="none"/><circle cx="20" cy="244" r=".9" fill="#444" stroke="none"/><circle cx="23.5" cy="244" r=".9" fill="#444" stroke="none"/>
<path d="M24.5 279.5v-8h-12v13h7" stroke="#444" stroke-width="1.1"/><path d="M15.5 281l3-8 3 8 M16.5 278.5h4" stroke="#444" stroke-width="1"/><path d="M22 284l2 2 4-4" stroke="#3f74d4" stroke-width="1.1"/>
<path d="M12.5 309.5h3l10-4v13l-10-4h-3z M15.5 314.5l1.5 4h2.5l-1-3.5" stroke="#444" stroke-width="1.1"/>
<circle cx="20" cy="346" r="7.5" stroke="#444" stroke-width="1.1"/><path d="M20 344v6" stroke="#444" stroke-width="1.2"/><circle cx="20" cy="341.5" r=".9" fill="#444" stroke="none"/>
<rect x="1212.5" y="170.5" width="15" height="11" rx="1" stroke="#333" stroke-width="1.3"/><path d="M1212.5 173.5h15 M1212.5 178.5h15 M1216.5 170.5v11 M1223.5 170.5v11" stroke="#333" stroke-width="1.1"/>
<path d="M1217 214.5a5 5 0 1 1 4.5-6" stroke="#aaa" stroke-width="1.1"/><rect x="1218.5" y="209.5" width="8" height="8" stroke="#aaa" stroke-width="1.1"/>
<rect x="1213.5" y="237.5" width="13" height="13" stroke="#aaa" stroke-width="1.1"/><path d="M1213.5 248l6-5 7 6" stroke="#aaa" stroke-width="1.1"/><circle cx="1222.5" cy="241.5" r="1.1" stroke="#aaa" stroke-width="1"/>
<rect x="1213.5" y="280.5" width="3" height="4" stroke="#aaa" stroke-width="1.1"/><rect x="1218.5" y="276.5" width="3" height="8" stroke="#aaa" stroke-width="1.1"/><rect x="1223.5" y="271.5" width="3" height="13" stroke="#aaa" stroke-width="1.1"/>
<path d="M1221 306v12.5 M1224.5 306v12.5 M1226 305.5h-7a3.2 3.2 0 0 0 0 6.4h2" stroke="#aaa" stroke-width="1.1"/>
<path d="M1215.5 349l4.5-11 4.5 11 M1217 345h6 M1214 353a8 5 0 0 1 12 0" stroke="#aaa" stroke-width="1.1"/>
<path d="M1222.5 382.5h-8.5v-10.5h10v6 M1216 375.5h6 M1216 378.5h4 M1219.5 380.5h8l-3 3v3.5h-2v-3.5z" stroke="#aaa" stroke-width="1.1"/>
<path d="M1189 186h7l-3.5-4z" fill="#a0a0a0" stroke="none"/>
<path d="M1189 653h7l-3.5 4z" fill="#a0a0a0" stroke="none"/>
<path d="M49 666v7l-4-3.5z" fill="#a0a0a0" stroke="none"/>
<path d="M1177 666v7l4-3.5z" fill="#a0a0a0" stroke="none"/>
<path d="M1189.5 224.5h6" stroke="#bbb" stroke-width="0.8"/>
<path d="M320.5 666.5v6" stroke="#bbb" stroke-width="0.8"/>
<path d="M1189.5 226.5h6" stroke="#bbb" stroke-width="0.8"/>
<path d="M322.5 666.5v6" stroke="#bbb" stroke-width="0.8"/>
<path d="M1189.5 228.5h6" stroke="#bbb" stroke-width="0.8"/>
<path d="M324.5 666.5v6" stroke="#bbb" stroke-width="0.8"/>
<path d="M1189.5 230.5h6" stroke="#bbb" stroke-width="0.8"/>
<path d="M326.5 666.5v6" stroke="#bbb" stroke-width="0.8"/>
<path d="M1189.5 232.5h6" stroke="#bbb" stroke-width="0.8"/>
<path d="M328.5 666.5v6" stroke="#bbb" stroke-width="0.8"/>
<path d="M1189.5 234.5h6" stroke="#bbb" stroke-width="0.8"/>
<path d="M330.5 666.5v6" stroke="#bbb" stroke-width="0.8"/>
<path d="M1189.5 236.5h6" stroke="#bbb" stroke-width="0.8"/>
<path d="M332.5 666.5v6" stroke="#bbb" stroke-width="0.8"/>
<path d="M25 687l-5 6 5 6" stroke="#aaa" stroke-width="1.1"/><path d="M45 687l5 6-5 6" stroke="#aaa" stroke-width="1.1"/>
<path d="M92 686v13 M85.5 692.5h13" stroke="#333" stroke-width="1.2"/>
<path d="M110.5 687h13 M110.5 692.5h13 M110.5 698h13" stroke="#333" stroke-width="1.2"/>
<path d="M1107 692.5h13" stroke="#333" stroke-width="1.2"/>
<path d="M1217.5 686v13 M1211 692.5h13" stroke="#333" stroke-width="1.2"/>
</svg>
</body></html>
